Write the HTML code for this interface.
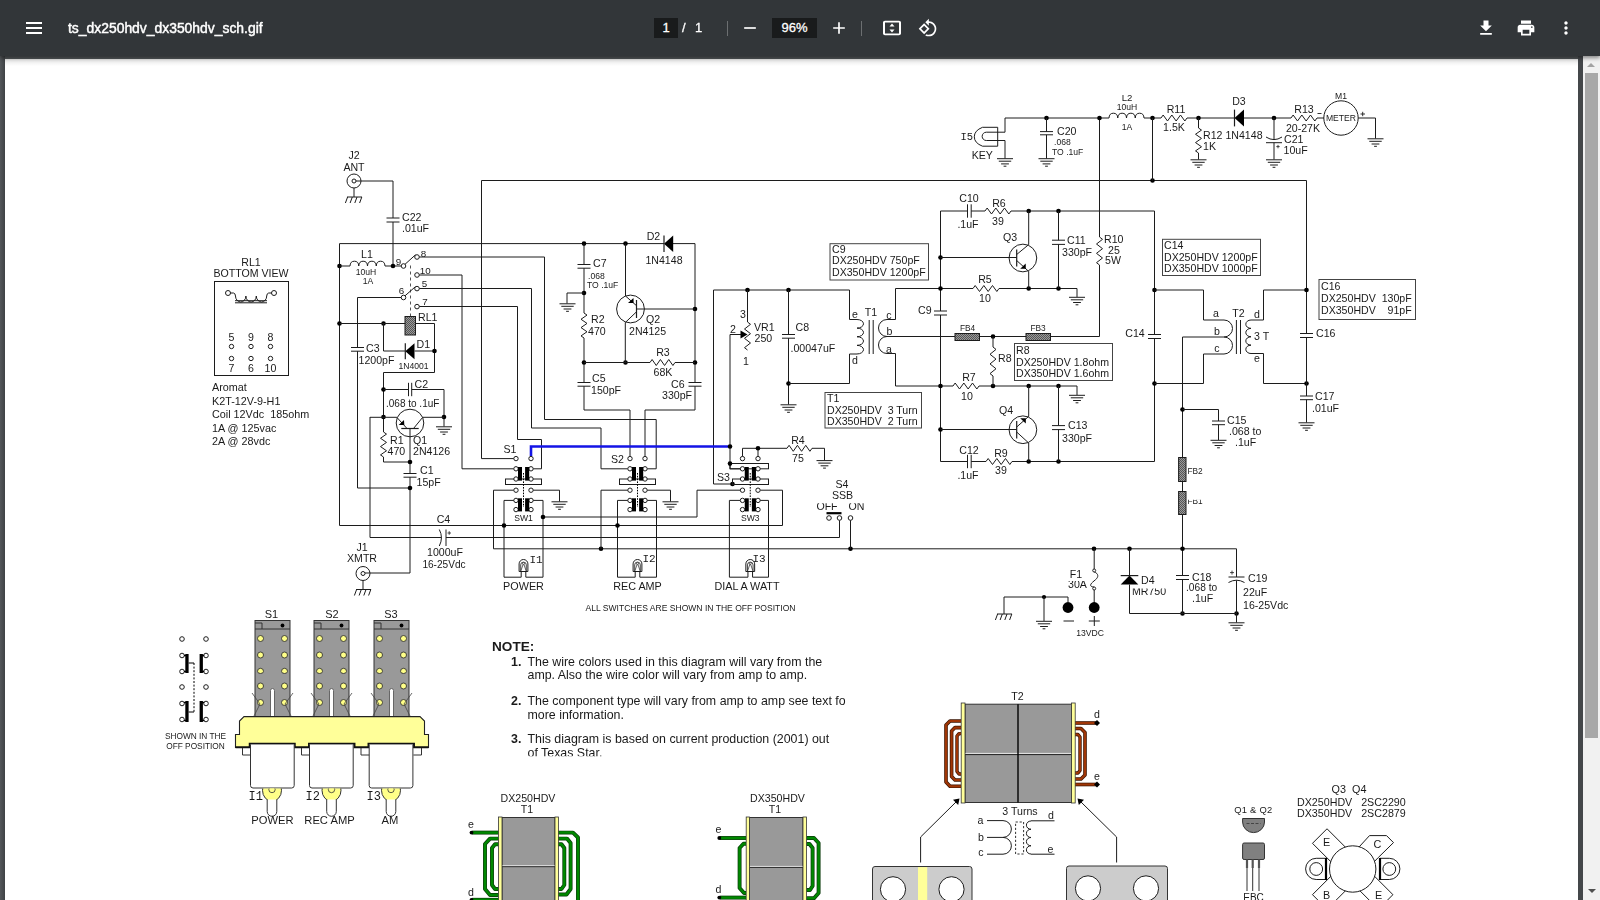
<!DOCTYPE html>
<html lang="en"><head><meta charset="utf-8">
<title>ts_dx250hdv_dx350hdv_sch.gif</title>
<style>
html,body{margin:0;padding:0;width:1600px;height:900px;overflow:hidden;background:#525659;font-family:"Liberation Sans",Arial,sans-serif;}
#viewer{position:absolute;left:0;top:0;width:1600px;height:900px;overflow:hidden;background:#525659;}
#gutl{position:absolute;left:0;top:56px;width:5px;height:844px;background:linear-gradient(90deg,#53575a,#3f4245);}
#page{position:absolute;left:5px;top:59px;width:1573px;height:841px;background:#fff;}
#pageshade{position:absolute;left:5px;top:59px;width:1573px;height:7px;background:linear-gradient(180deg,rgba(0,0,0,.10),rgba(0,0,0,0));}
#gutr{position:absolute;left:1578px;top:56px;width:5px;height:844px;background:#44474a;}
#sb{position:absolute;left:1583px;top:56px;width:17px;height:844px;background:#f1f1f1;}
#sb .thumb{position:absolute;left:2px;top:17px;width:13px;height:665px;background:#a8a8a8;}
#sb .up{position:absolute;left:4px;top:7px;width:0;height:0;border-left:4px solid transparent;border-right:4px solid transparent;border-bottom:4px solid #a3a3a3;}
#sb .dn{position:absolute;left:5px;top:833px;width:0;height:0;border-left:4px solid transparent;border-right:4px solid transparent;border-top:4px solid #505050;}
#tb{position:absolute;left:0;top:0;width:1600px;height:56px;background:#323639;box-shadow:0 2px 4px rgba(0,0,0,.45);color:#fff;}
#tb .title{position:absolute;left:68px;top:0;height:56px;line-height:56px;font-size:13.9px;font-weight:normal;-webkit-text-stroke:0.45px #fff;letter-spacing:0;white-space:nowrap;}
#tb .box{position:absolute;top:18px;height:20px;background:#191b1c;line-height:20px;text-align:center;font-size:13px;-webkit-text-stroke:0.3px #fff;}
#tb .t{position:absolute;top:18px;height:20px;line-height:20px;font-size:13px;-webkit-text-stroke:0.3px #fff;}
#tb .sep{position:absolute;top:21px;width:1px;height:15px;background:#6c6f71;}
#tb svg{position:absolute;}
svg text{font-family:"Liberation Sans",Arial,sans-serif;fill:#1a1a1a;}
#sch{position:absolute;left:0;top:0;will-change:transform;}
</style></head>
<body>
<div id="viewer">
<div id="gutl"></div>
<div id="page"></div>
<div id="pageshade"></div>
<svg id="sch" width="1600" height="900" viewBox="0 0 1600 900">
<defs>
<pattern id="hat" width="2" height="2" patternUnits="userSpaceOnUse"><rect width="2" height="2" fill="#9a9a9a"/><rect width="1" height="1" fill="#555"/><rect x="1" y="1" width="1" height="1" fill="#555"/></pattern>
<clipPath id="cpage"><rect x="5" y="59" width="1573" height="841"/></clipPath>
<clipPath id="cnote"><rect x="480" y="630" width="365.4" height="126.2"/></clipPath>
<clipPath id="clamp"><rect x="240" y="788.6" width="200" height="20"/></clipPath>
<clipPath id="cfb1"><rect x="1186" y="499.8" width="30" height="10"/></clipPath>
<clipPath id="c30a"><rect x="1067.3" y="581" width="30" height="10"/></clipPath>
<clipPath id="cmr"><rect x="1130" y="588.5" width="50" height="10"/></clipPath>
<clipPath id="coff"><rect x="810" y="503.2" width="70" height="10"/></clipPath>
</defs>
<g clip-path="url(#cpage)">
<text x="251" y="265.82" font-size="10.6" text-anchor="middle" xml:space="preserve" >RL1</text>
<text x="251" y="277.12" font-size="10.6" text-anchor="middle" xml:space="preserve" >BOTTOM VIEW</text>
<rect x="214.5" y="281.5" width="74" height="94" fill="none" stroke="#1c1c1c" stroke-width="1" rx="0" />
<circle cx="228" cy="293" r="2.5" fill="#fff" stroke="#1c1c1c" stroke-width="1"/>
<circle cx="274" cy="293" r="2.5" fill="#fff" stroke="#1c1c1c" stroke-width="1"/>
<path d="M230.3,293 H233.5 Q235.3,293.2 235.5,296 a5.2,6 0 0 0 10.4,0 a5.2,6 0 0 0 10.4,0 a5.2,6 0 0 0 10.4,0 Q266.9,293.2 268.7,293 H271.7" fill="none" stroke="#1c1c1c" stroke-width="1" />
<polyline points="235,300.7 267,300.7" fill="none" stroke="#1c1c1c" stroke-width="1" />
<polyline points="235,302.8 267,302.8" fill="none" stroke="#1c1c1c" stroke-width="1" />
<text x="231.5" y="340.82" font-size="10.6" text-anchor="middle" xml:space="preserve" >5</text>
<circle cx="231.5" cy="346.5" r="2.2" fill="#fff" stroke="#1c1c1c" stroke-width="1"/>
<circle cx="231.5" cy="358.5" r="2.2" fill="#fff" stroke="#1c1c1c" stroke-width="1"/>
<text x="231.5" y="372.12" font-size="10.6" text-anchor="middle" xml:space="preserve" >7</text>
<text x="251" y="340.82" font-size="10.6" text-anchor="middle" xml:space="preserve" >9</text>
<circle cx="251" cy="346.5" r="2.2" fill="#fff" stroke="#1c1c1c" stroke-width="1"/>
<circle cx="251" cy="358.5" r="2.2" fill="#fff" stroke="#1c1c1c" stroke-width="1"/>
<text x="251" y="372.12" font-size="10.6" text-anchor="middle" xml:space="preserve" >6</text>
<text x="270.5" y="340.82" font-size="10.6" text-anchor="middle" xml:space="preserve" >8</text>
<circle cx="270.5" cy="346.5" r="2.2" fill="#fff" stroke="#1c1c1c" stroke-width="1"/>
<circle cx="270.5" cy="358.5" r="2.2" fill="#fff" stroke="#1c1c1c" stroke-width="1"/>
<text x="270.5" y="372.12" font-size="10.6" text-anchor="middle" xml:space="preserve" >10</text>
<text x="212" y="391.19" font-size="10.8" xml:space="preserve" >Aromat</text>
<text x="212" y="404.64" font-size="10.8" xml:space="preserve" >K2T-12V-9-H1</text>
<text x="212" y="418.09" font-size="10.8" xml:space="preserve" >Coil 12Vdc  185ohm</text>
<text x="212" y="431.54" font-size="10.8" xml:space="preserve" >1A @ 125vac</text>
<text x="212" y="444.99" font-size="10.8" xml:space="preserve" >2A @ 28vdc</text>
<text x="354" y="158.82" font-size="10.6" text-anchor="middle" xml:space="preserve" >J2</text>
<text x="354" y="171.32" font-size="10.6" text-anchor="middle" xml:space="preserve" >ANT</text>
<circle cx="354" cy="181" r="7" fill="#fff" stroke="#1c1c1c" stroke-width="1"/>
<circle cx="354" cy="181" r="2" fill="#fff" stroke="#1c1c1c" stroke-width="1"/>
<polyline points="356,181 393,181 393,218" fill="none" stroke="#1c1c1c" stroke-width="1" />
<polyline points="386.5,218 399.5,218" fill="none" stroke="#1c1c1c" stroke-width="1" />
<polyline points="386.5,222 399.5,222" fill="none" stroke="#1c1c1c" stroke-width="1" />
<polyline points="393,222 393,266" fill="none" stroke="#1c1c1c" stroke-width="1" />
<polyline points="354,188 354,197" fill="none" stroke="#1c1c1c" stroke-width="1" />
<polyline points="347,197 362,197" fill="none" stroke="#1c1c1c" stroke-width="1" />
<polyline points="347.6,197 345.4,203" fill="none" stroke="#1c1c1c" stroke-width="1" />
<polyline points="352.3,197 350.1,203" fill="none" stroke="#1c1c1c" stroke-width="1" />
<polyline points="357,197 354.8,203" fill="none" stroke="#1c1c1c" stroke-width="1" />
<polyline points="361.8,197 359.6,203" fill="none" stroke="#1c1c1c" stroke-width="1" />
<text x="402" y="220.82" font-size="10.6" xml:space="preserve" >C22</text>
<text x="402" y="231.82" font-size="10.6" xml:space="preserve" >.01uF</text>
<polyline points="664,243.6 339.5,243.6 339.5,525.5 782.5,525.5 782.5,490.2 760.2,490.2" fill="none" stroke="#1c1c1c" stroke-width="1" />
<polyline points="673,243.6 695,243.6 695,382.5" fill="none" stroke="#1c1c1c" stroke-width="1" />
<circle cx="339.5" cy="266" r="2.3" fill="#000"/>
<polyline points="339.5,266 350,266" fill="none" stroke="#1c1c1c" stroke-width="1" />
<path d="M350,266 a4.38,5.03 0 0 1 8.75,0 a4.38,5.03 0 0 1 8.75,0 a4.38,5.03 0 0 1 8.75,0 a4.38,5.03 0 0 1 8.75,0" fill="none" stroke="#1c1c1c" stroke-width="1" />
<polyline points="385,266 401.2,266" fill="none" stroke="#1c1c1c" stroke-width="1" />
<circle cx="393" cy="266" r="2.3" fill="#000"/>
<text x="367" y="257.82" font-size="10.6" text-anchor="middle" xml:space="preserve" >L1</text>
<text x="366" y="275.1" font-size="8.6" text-anchor="middle" fill="#000" xml:space="preserve" >10uH</text>
<text x="368" y="284.1" font-size="8.6" text-anchor="middle" fill="#000" xml:space="preserve" >1A</text>
<text x="398.6" y="264.53" font-size="9.8" text-anchor="middle" xml:space="preserve" >9</text>
<text x="423.6" y="256.53" font-size="9.8" text-anchor="middle" xml:space="preserve" >8</text>
<text x="425.2" y="274.03" font-size="9.8" text-anchor="middle" xml:space="preserve" >10</text>
<text x="424.5" y="287.03" font-size="9.8" text-anchor="middle" xml:space="preserve" >5</text>
<text x="401.5" y="294.03" font-size="9.8" text-anchor="middle" xml:space="preserve" >6</text>
<text x="425" y="305.03" font-size="9.8" text-anchor="middle" xml:space="preserve" >7</text>
<polyline points="410.5,265.5 410.5,316.5" fill="none" stroke="#555" stroke-width="1" stroke-dasharray="3,3"/>
<polyline points="405,264.3 415.5,254.8" fill="none" stroke="#1c1c1c" stroke-width="1" />
<polyline points="405,295.8 415.5,286.6" fill="none" stroke="#1c1c1c" stroke-width="1" />
<circle cx="403.5" cy="266" r="2.3" fill="#fff" stroke="#1c1c1c" stroke-width="1"/>
<circle cx="417" cy="257" r="2.3" fill="#fff" stroke="#1c1c1c" stroke-width="1"/>
<circle cx="417" cy="275" r="2.3" fill="#fff" stroke="#1c1c1c" stroke-width="1"/>
<circle cx="403.5" cy="297.5" r="2.3" fill="#fff" stroke="#1c1c1c" stroke-width="1"/>
<circle cx="417" cy="288.6" r="2.3" fill="#fff" stroke="#1c1c1c" stroke-width="1"/>
<circle cx="417" cy="306.6" r="2.3" fill="#fff" stroke="#1c1c1c" stroke-width="1"/>
<polyline points="419.3,257 544.5,257 544.5,419.5 656.2,419.5 656.2,468.8 647.2,468.8" fill="none" stroke="#1c1c1c" stroke-width="1" />
<polyline points="419.3,275 462,275 462,468.8 513.8,468.8" fill="none" stroke="#1c1c1c" stroke-width="1" />
<polyline points="419.3,288.5 531.5,288.5 531.5,428 601,428 601,468.8 627.8,468.8" fill="none" stroke="#1c1c1c" stroke-width="1" />
<polyline points="419.3,306.5 517.5,306.5 517.5,439.5 541.5,439.5 541.5,468.8 533.2,468.8" fill="none" stroke="#1c1c1c" stroke-width="1" />
<polyline points="401.2,297.5 357.5,297.5 357.5,347.5" fill="none" stroke="#1c1c1c" stroke-width="1" />
<polyline points="351,347.5 364,347.5" fill="none" stroke="#1c1c1c" stroke-width="1" />
<polyline points="351,351.2 364,351.2" fill="none" stroke="#1c1c1c" stroke-width="1" />
<polyline points="357.5,351.2 357.5,488 410,488" fill="none" stroke="#1c1c1c" stroke-width="1" />
<text x="366" y="352.32" font-size="10.6" xml:space="preserve" >C3</text>
<text x="358.5" y="364.02" font-size="10.6" xml:space="preserve" >1200pF</text>
<polyline points="513.8,458.6 481.5,458.6 481.5,180.5 1306.5,180.5 1306.5,333.5" fill="none" stroke="#1c1c1c" stroke-width="1" />
<circle cx="339.5" cy="323.5" r="2.3" fill="#000"/>
<circle cx="383.5" cy="323.5" r="2.3" fill="#000"/>
<polyline points="339.5,323.5 405,323.5" fill="none" stroke="#1c1c1c" stroke-width="1" />
<rect x="405" y="316.5" width="10.5" height="18.5" fill="url(#hat)" stroke="#1c1c1c" stroke-width="1" rx="0" />
<text x="418" y="320.82" font-size="10.6" xml:space="preserve" >RL1</text>
<polyline points="415.5,323.5 434.5,323.5 434.5,372.5 383.5,372.5 383.5,432" fill="none" stroke="#1c1c1c" stroke-width="1" />
<polyline points="383.5,432 386.5,434.08 380.5,438.25 386.5,442.42 380.5,446.58 386.5,450.75 380.5,454.92 383.5,457" fill="none" stroke="#1c1c1c" stroke-width="1" />
<polyline points="383.5,457 383.5,462 410,462" fill="none" stroke="#1c1c1c" stroke-width="1" />
<polyline points="383.5,323.5 383.5,351 405,351" fill="none" stroke="#1c1c1c" stroke-width="1" />
<polygon points="405.3,351.2 414.5,343.2 414.5,359.2" fill="#000"/>
<polyline points="405.3,343.2 405.3,359.2" fill="none" stroke="#1c1c1c" stroke-width="1.2" />
<polyline points="414.5,351 434.5,351" fill="none" stroke="#1c1c1c" stroke-width="1" />
<circle cx="434.5" cy="351" r="2.3" fill="#000"/>
<text x="416.5" y="348.32" font-size="10.6" xml:space="preserve" >D1</text>
<text x="413.5" y="368.6" font-size="8.6" text-anchor="middle" fill="#000" xml:space="preserve" >1N4001</text>
<circle cx="383.5" cy="389.5" r="2.3" fill="#000"/>
<polyline points="383.5,389.5 408.5,389.5" fill="none" stroke="#1c1c1c" stroke-width="1" />
<polyline points="408.5,382.8 408.5,396.2" fill="none" stroke="#1c1c1c" stroke-width="1" />
<polyline points="411.7,382.8 411.7,396.2" fill="none" stroke="#1c1c1c" stroke-width="1" />
<polyline points="411.7,389.5 444,389.5 444,426.5" fill="none" stroke="#1c1c1c" stroke-width="1" />
<polyline points="436,426.8 452,426.8" fill="none" stroke="#1c1c1c" stroke-width="1" />
<polyline points="437.8,429.3 450.2,429.3" fill="none" stroke="#1c1c1c" stroke-width="1" />
<polyline points="440.1,432 447.9,432" fill="none" stroke="#1c1c1c" stroke-width="1" />
<polyline points="442.6,434.3 445.4,434.3" fill="none" stroke="#1c1c1c" stroke-width="1" />
<text x="414.5" y="387.82" font-size="10.6" xml:space="preserve" >C2</text>
<text x="386" y="406.6" font-size="10" xml:space="preserve" >.068 to .1uF</text>
<circle cx="383.5" cy="417" r="2.3" fill="#000"/>
<circle cx="444" cy="417" r="2.3" fill="#000"/>
<circle cx="410" cy="423" r="13.8" fill="none" stroke="#1c1c1c" stroke-width="1"/>
<polyline points="370,417.3 396.8,417.3 407,428.5" fill="none" stroke="#1c1c1c" stroke-width="1" />
<polyline points="444,417.3 422.7,417.3 413.5,428.5" fill="none" stroke="#1c1c1c" stroke-width="1" />
<polyline points="401.3,428.5 418.7,428.5" fill="none" stroke="#1c1c1c" stroke-width="1.2" />
<polygon points="404,420 404.3,425 398.7,425" fill="#000"/>
<polyline points="410,428.5 410,473.5" fill="none" stroke="#1c1c1c" stroke-width="1" />
<polyline points="403.5,473.5 416.5,473.5" fill="none" stroke="#1c1c1c" stroke-width="1" />
<polyline points="403.5,477.2 416.5,477.2" fill="none" stroke="#1c1c1c" stroke-width="1" />
<polyline points="410,477.2 410,573 370,573" fill="none" stroke="#1c1c1c" stroke-width="1" />
<circle cx="410" cy="462" r="2.3" fill="#000"/>
<circle cx="410" cy="488" r="2.3" fill="#000"/>
<text x="390" y="443.82" font-size="10.6" xml:space="preserve" >R1</text>
<text x="387.5" y="455.12" font-size="10.6" xml:space="preserve" >470</text>
<text x="413" y="443.82" font-size="10.6" xml:space="preserve" >Q1</text>
<text x="413" y="455.32" font-size="10.6" xml:space="preserve" >2N4126</text>
<text x="420" y="473.82" font-size="10.6" xml:space="preserve" >C1</text>
<text x="416.5" y="486.32" font-size="10.6" xml:space="preserve" >15pF</text>
<polyline points="370,417 370,537.5 441.5,537.5" fill="none" stroke="#1c1c1c" stroke-width="1" />
<path d="M439.3,529.5 q4.3,8.2 0,16.5" fill="none" stroke="#1c1c1c" stroke-width="1" />
<polyline points="446,529.5 446,546" fill="none" stroke="#1c1c1c" stroke-width="1" />
<polyline points="446,537.5 839.5,537.5 839.5,520.3" fill="none" stroke="#1c1c1c" stroke-width="1" />
<text x="443.5" y="523.32" font-size="10.6" text-anchor="middle" xml:space="preserve" >C4</text>
<polyline points="447.5,533 451,533" fill="none" stroke="#1c1c1c" stroke-width="0.8" />
<polyline points="449.2,531.2 449.2,534.8" fill="none" stroke="#1c1c1c" stroke-width="0.8" />
<text x="445" y="556.32" font-size="10.6" text-anchor="middle" xml:space="preserve" >1000uF</text>
<text x="444" y="567.64" font-size="10.1" text-anchor="middle" xml:space="preserve" >16-25Vdc</text>
<text x="362" y="550.82" font-size="10.6" text-anchor="middle" xml:space="preserve" >J1</text>
<text x="362" y="562.32" font-size="10.6" text-anchor="middle" xml:space="preserve" >XMTR</text>
<circle cx="363" cy="573.5" r="7" fill="#fff" stroke="#1c1c1c" stroke-width="1"/>
<circle cx="363" cy="573.5" r="2" fill="#fff" stroke="#1c1c1c" stroke-width="1"/>
<polyline points="365,573 370,573" fill="none" stroke="#1c1c1c" stroke-width="1" />
<polyline points="363,580.5 363,589.5" fill="none" stroke="#1c1c1c" stroke-width="1" />
<polyline points="356,589.5 371,589.5" fill="none" stroke="#1c1c1c" stroke-width="1" />
<polyline points="356.6,589.5 354.4,595.5" fill="none" stroke="#1c1c1c" stroke-width="1" />
<polyline points="361.3,589.5 359.1,595.5" fill="none" stroke="#1c1c1c" stroke-width="1" />
<polyline points="366,589.5 363.8,595.5" fill="none" stroke="#1c1c1c" stroke-width="1" />
<polyline points="370.8,589.5 368.6,595.5" fill="none" stroke="#1c1c1c" stroke-width="1" />
<circle cx="584" cy="243.6" r="2.3" fill="#000"/>
<circle cx="625.5" cy="243.6" r="2.3" fill="#000"/>
<polygon points="664,243.8 673.2,235.6 673.2,252" fill="#000"/>
<polyline points="664,235.6 664,252" fill="none" stroke="#1c1c1c" stroke-width="1.2" />
<text x="653.5" y="240.32" font-size="10.6" text-anchor="middle" xml:space="preserve" >D2</text>
<text x="664" y="264.32" font-size="10.6" text-anchor="middle" xml:space="preserve" >1N4148</text>
<polyline points="584,243.6 584,264.5" fill="none" stroke="#1c1c1c" stroke-width="1" />
<polyline points="577.5,264.5 590.5,264.5" fill="none" stroke="#1c1c1c" stroke-width="1" />
<polyline points="577.5,268.2 590.5,268.2" fill="none" stroke="#1c1c1c" stroke-width="1" />
<polyline points="584,268.2 584,313" fill="none" stroke="#1c1c1c" stroke-width="1" />
<polyline points="584,313 587,315.08 581,319.25 587,323.42 581,327.58 587,331.75 581,335.92 584,338" fill="none" stroke="#1c1c1c" stroke-width="1" />
<polyline points="584,338 584,382.5" fill="none" stroke="#1c1c1c" stroke-width="1" />
<text x="593" y="266.82" font-size="10.6" xml:space="preserve" >C7</text>
<text x="588" y="278.6" font-size="8.6" fill="#000" xml:space="preserve" >.068</text>
<text x="587" y="288.1" font-size="8.6" fill="#000" xml:space="preserve" >TO .1uF</text>
<circle cx="584" cy="293" r="2.3" fill="#000"/>
<polyline points="584,293 567,293 567,303.5" fill="none" stroke="#1c1c1c" stroke-width="1" />
<polyline points="559.5,303.8 575.5,303.8" fill="none" stroke="#1c1c1c" stroke-width="1" />
<polyline points="561.3,306.3 573.7,306.3" fill="none" stroke="#1c1c1c" stroke-width="1" />
<polyline points="563.6,309 571.4,309" fill="none" stroke="#1c1c1c" stroke-width="1" />
<polyline points="566.1,311.3 568.9,311.3" fill="none" stroke="#1c1c1c" stroke-width="1" />
<text x="591" y="323.32" font-size="10.6" xml:space="preserve" >R2</text>
<text x="588" y="334.82" font-size="10.6" xml:space="preserve" >470</text>
<circle cx="584" cy="362.5" r="2.3" fill="#000"/>
<circle cx="625.5" cy="362.5" r="2.3" fill="#000"/>
<circle cx="695" cy="362.5" r="2.3" fill="#000"/>
<circle cx="695" cy="309" r="2.3" fill="#000"/>
<circle cx="630.5" cy="309" r="13.9" fill="none" stroke="#1c1c1c" stroke-width="1"/>
<polyline points="625.5,243.6 625.5,296 636.3,305.5" fill="none" stroke="#1c1c1c" stroke-width="1" />
<polyline points="636.3,312 625.3,322.5 625.3,362.5" fill="none" stroke="#1c1c1c" stroke-width="1" />
<polyline points="636.5,300 636.5,318" fill="none" stroke="#1c1c1c" stroke-width="1.2" />
<polyline points="636.5,309 695,309" fill="none" stroke="#1c1c1c" stroke-width="1" />
<polygon points="633.5,298 633.6,303 628,303" fill="#000"/>
<text x="646" y="323.32" font-size="10.6" xml:space="preserve" >Q2</text>
<text x="629" y="335.32" font-size="10.6" xml:space="preserve" >2N4125</text>
<polyline points="584,362.5 650,362.5" fill="none" stroke="#1c1c1c" stroke-width="1" />
<polyline points="650,362.5 652.08,359.5 656.25,365.5 660.42,359.5 664.58,365.5 668.75,359.5 672.92,365.5 675,362.5" fill="none" stroke="#1c1c1c" stroke-width="1" />
<polyline points="675,362.5 695,362.5" fill="none" stroke="#1c1c1c" stroke-width="1" />
<text x="663" y="356.32" font-size="10.6" text-anchor="middle" xml:space="preserve" >R3</text>
<text x="663" y="376.12" font-size="10.6" text-anchor="middle" xml:space="preserve" >68K</text>
<polyline points="577.5,382.5 590.5,382.5" fill="none" stroke="#1c1c1c" stroke-width="1" />
<polyline points="577.5,386.2 590.5,386.2" fill="none" stroke="#1c1c1c" stroke-width="1" />
<polyline points="584,386.2 584,410 630,410 630,456.4" fill="none" stroke="#1c1c1c" stroke-width="1" />
<polyline points="688.5,382.5 701.5,382.5" fill="none" stroke="#1c1c1c" stroke-width="1" />
<polyline points="688.5,386.2 701.5,386.2" fill="none" stroke="#1c1c1c" stroke-width="1" />
<polyline points="695,386.2 695,410 645,410 645,456.4" fill="none" stroke="#1c1c1c" stroke-width="1" />
<text x="592" y="381.82" font-size="10.6" xml:space="preserve" >C5</text>
<text x="591" y="394.12" font-size="10.6" xml:space="preserve" >150pF</text>
<text x="671" y="388.32" font-size="10.6" xml:space="preserve" >C6</text>
<text x="662" y="399.32" font-size="10.6" xml:space="preserve" >330pF</text>
<polyline points="732.5,484 713.5,484 713.5,290 849.5,290 849.5,319.5 857,319.5" fill="none" stroke="#1c1c1c" stroke-width="1" />
<circle cx="747.5" cy="290" r="2.3" fill="#000"/>
<circle cx="788.5" cy="290" r="2.3" fill="#000"/>
<circle cx="732.5" cy="484" r="2.3" fill="#000"/>
<polyline points="747.5,290 747.5,322" fill="none" stroke="#1c1c1c" stroke-width="1" />
<polyline points="747.5,322 750.5,324.33 744.5,329 750.5,333.67 744.5,338.33 750.5,343 744.5,347.67 747.5,350" fill="none" stroke="#1c1c1c" stroke-width="1" />
<text x="743" y="318.32" font-size="10.6" text-anchor="middle" xml:space="preserve" >3</text>
<text x="733" y="332.82" font-size="10.6" text-anchor="middle" xml:space="preserve" >2</text>
<text x="746" y="365.32" font-size="10.6" text-anchor="middle" xml:space="preserve" >1</text>
<polyline points="741,334.5 730,334.5 730,468.8 740.3,468.8" fill="none" stroke="#1c1c1c" stroke-width="1" />
<polygon points="747.5,334.5 740.5,330.6 740.5,338.4" fill="#000"/>
<text x="754" y="330.82" font-size="10.6" xml:space="preserve" >VR1</text>
<text x="754.5" y="342.32" font-size="10.6" xml:space="preserve" >250</text>
<polyline points="788.5,290 788.5,334.5" fill="none" stroke="#1c1c1c" stroke-width="1" />
<polyline points="782,334.5 795,334.5" fill="none" stroke="#1c1c1c" stroke-width="1" />
<polyline points="782,338.2 795,338.2" fill="none" stroke="#1c1c1c" stroke-width="1" />
<polyline points="788.5,338.2 788.5,404.5" fill="none" stroke="#1c1c1c" stroke-width="1" />
<polyline points="780.5,404.8 796.5,404.8" fill="none" stroke="#1c1c1c" stroke-width="1" />
<polyline points="782.3,407.3 794.7,407.3" fill="none" stroke="#1c1c1c" stroke-width="1" />
<polyline points="784.6,410 792.4,410" fill="none" stroke="#1c1c1c" stroke-width="1" />
<polyline points="787.1,412.3 789.9,412.3" fill="none" stroke="#1c1c1c" stroke-width="1" />
<circle cx="788.5" cy="383.5" r="2.3" fill="#000"/>
<text x="795.5" y="330.82" font-size="10.6" xml:space="preserve" >C8</text>
<text x="790.5" y="351.82" font-size="10.6" xml:space="preserve" >.00047uF</text>
<polyline points="788.5,383.5 849.5,383.5 849.5,354 857,354" fill="none" stroke="#1c1c1c" stroke-width="1" />
<path d="M857,319.5 a6.5,4.31 0 0 1 0,8.62 a6.5,4.31 0 0 1 0,8.62 a6.5,4.31 0 0 1 0,8.62 a6.5,4.31 0 0 1 0,8.62" fill="none" stroke="#1c1c1c" stroke-width="1" />
<polyline points="869.2,320 869.2,354" fill="none" stroke="#1c1c1c" stroke-width="1" />
<polyline points="873.2,320 873.2,354" fill="none" stroke="#1c1c1c" stroke-width="1" />
<text x="871" y="315.82" font-size="10.6" text-anchor="middle" xml:space="preserve" >T1</text>
<text x="855" y="317.86" font-size="10.6" text-anchor="middle" xml:space="preserve" >e</text>
<text x="855" y="363.82" font-size="10.6" text-anchor="middle" xml:space="preserve" >d</text>
<path d="M895.5,319.5 L887,319.5 a8.5,8.5 0 0 0 0,17 a8.5,8.5 0 0 0 0,17 L895.5,353.5" fill="none" stroke="#1c1c1c" stroke-width="1" />
<text x="889" y="318.86" font-size="10.6" text-anchor="middle" xml:space="preserve" >c</text>
<text x="889.5" y="335.32" font-size="10.6" text-anchor="middle" xml:space="preserve" >b</text>
<text x="889" y="352.86" font-size="10.6" text-anchor="middle" xml:space="preserve" >a</text>
<polyline points="895.5,319.5 895.5,288.5 973,288.5" fill="none" stroke="#1c1c1c" stroke-width="1" />
<polyline points="973,288.5 975.17,285.5 979.5,291.5 983.83,285.5 988.17,291.5 992.5,285.5 996.83,291.5 999,288.5" fill="none" stroke="#1c1c1c" stroke-width="1" />
<polyline points="999,288.5 1077,288.5 1077,297" fill="none" stroke="#1c1c1c" stroke-width="1" />
<polyline points="1069,297.3 1085,297.3" fill="none" stroke="#1c1c1c" stroke-width="1" />
<polyline points="1070.8,299.8 1083.2,299.8" fill="none" stroke="#1c1c1c" stroke-width="1" />
<polyline points="1073.1,302.5 1080.9,302.5" fill="none" stroke="#1c1c1c" stroke-width="1" />
<polyline points="1075.6,304.8 1078.4,304.8" fill="none" stroke="#1c1c1c" stroke-width="1" />
<polyline points="895.5,353.5 895.5,386 953,386" fill="none" stroke="#1c1c1c" stroke-width="1" />
<polyline points="953,386 955.17,383 959.5,389 963.83,383 968.17,389 972.5,383 976.83,389 979,386" fill="none" stroke="#1c1c1c" stroke-width="1" />
<polyline points="979,386 1077,386 1077,395" fill="none" stroke="#1c1c1c" stroke-width="1" />
<polyline points="1069,395.3 1085,395.3" fill="none" stroke="#1c1c1c" stroke-width="1" />
<polyline points="1070.8,397.8 1083.2,397.8" fill="none" stroke="#1c1c1c" stroke-width="1" />
<polyline points="1073.1,400.5 1080.9,400.5" fill="none" stroke="#1c1c1c" stroke-width="1" />
<polyline points="1075.6,402.8 1078.4,402.8" fill="none" stroke="#1c1c1c" stroke-width="1" />
<polyline points="887,336.5 955,336.5" fill="none" stroke="#1c1c1c" stroke-width="1" />
<rect x="955" y="333.5" width="24.5" height="7" fill="url(#hat)" stroke="#1c1c1c" stroke-width="1" rx="0" />
<polyline points="979.5,336.5 1026,336.5" fill="none" stroke="#1c1c1c" stroke-width="1" />
<rect x="1026" y="333.5" width="24.5" height="7" fill="url(#hat)" stroke="#1c1c1c" stroke-width="1" rx="0" />
<polyline points="1050.5,336.5 1099.5,336.5 1099.5,265" fill="none" stroke="#1c1c1c" stroke-width="1" />
<text x="967.5" y="330.99" font-size="8.3" text-anchor="middle" fill="#000" xml:space="preserve" >FB4</text>
<text x="1038" y="330.99" font-size="8.3" text-anchor="middle" fill="#000" xml:space="preserve" >FB3</text>
<rect x="830" y="243.7" width="98.5" height="36.3" fill="none" stroke="#444" stroke-width="1" rx="0" />
<text x="832" y="253.32" font-size="10.6" xml:space="preserve" >C9</text>
<text x="832" y="264.32" font-size="10.6" xml:space="preserve" >DX250HDV 750pF</text>
<text x="832" y="275.82" font-size="10.6" xml:space="preserve" >DX350HDV 1200pF</text>
<rect x="825" y="392.5" width="96.5" height="35.5" fill="none" stroke="#444" stroke-width="1" rx="0" />
<text x="827" y="402.32" font-size="10.6" xml:space="preserve" >T1</text>
<text x="827" y="413.82" font-size="10.6" xml:space="preserve" >DX250HDV  3 Turn</text>
<text x="827" y="425.32" font-size="10.6" xml:space="preserve" >DX350HDV  2 Turn</text>
<polyline points="940.5,211 940.5,311" fill="none" stroke="#1c1c1c" stroke-width="1" />
<polyline points="934,311 947,311" fill="none" stroke="#1c1c1c" stroke-width="1" />
<polyline points="934,315 947,315" fill="none" stroke="#1c1c1c" stroke-width="1" />
<polyline points="940.5,315 940.5,461.5 967.5,461.5" fill="none" stroke="#1c1c1c" stroke-width="1" />
<polyline points="967.5,454.8 967.5,468.2" fill="none" stroke="#1c1c1c" stroke-width="1" />
<polyline points="971.2,454.8 971.2,468.2" fill="none" stroke="#1c1c1c" stroke-width="1" />
<polyline points="971.2,461.5 986,461.5" fill="none" stroke="#1c1c1c" stroke-width="1" />
<polyline points="986,461.5 988.17,458.5 992.5,464.5 996.83,458.5 1001.17,464.5 1005.5,458.5 1009.83,464.5 1012,461.5" fill="none" stroke="#1c1c1c" stroke-width="1" />
<polyline points="1012,461.5 1154.5,461.5 1154.5,338.5" fill="none" stroke="#1c1c1c" stroke-width="1" />
<polyline points="1148,334.5 1161,334.5" fill="none" stroke="#1c1c1c" stroke-width="1" />
<polyline points="1148,338.5 1161,338.5" fill="none" stroke="#1c1c1c" stroke-width="1" />
<polyline points="1154.5,334.5 1154.5,211 1011,211" fill="none" stroke="#1c1c1c" stroke-width="1" />
<polyline points="985,211 987.17,208 991.5,214 995.83,208 1000.17,214 1004.5,208 1008.83,214 1011,211" fill="none" stroke="#1c1c1c" stroke-width="1" />
<polyline points="985,211 971.2,211" fill="none" stroke="#1c1c1c" stroke-width="1" />
<polyline points="967.5,204.3 967.5,217.7" fill="none" stroke="#1c1c1c" stroke-width="1" />
<polyline points="971.2,204.3 971.2,217.7" fill="none" stroke="#1c1c1c" stroke-width="1" />
<polyline points="967.5,211 940.5,211" fill="none" stroke="#1c1c1c" stroke-width="1" />
<circle cx="940.5" cy="257.5" r="2.3" fill="#000"/>
<circle cx="940.5" cy="288.5" r="2.3" fill="#000"/>
<circle cx="940.5" cy="386" r="2.3" fill="#000"/>
<circle cx="940.5" cy="429.5" r="2.3" fill="#000"/>
<circle cx="1028.7" cy="211" r="2.3" fill="#000"/>
<circle cx="1058.5" cy="211" r="2.3" fill="#000"/>
<circle cx="1028.7" cy="288.5" r="2.3" fill="#000"/>
<circle cx="1058.5" cy="288.5" r="2.3" fill="#000"/>
<circle cx="993" cy="336.5" r="2.3" fill="#000"/>
<circle cx="993" cy="386" r="2.3" fill="#000"/>
<circle cx="1028.7" cy="386" r="2.3" fill="#000"/>
<circle cx="1058.5" cy="386" r="2.3" fill="#000"/>
<circle cx="1028.7" cy="461.5" r="2.3" fill="#000"/>
<circle cx="1058.5" cy="461.5" r="2.3" fill="#000"/>
<circle cx="1154.5" cy="290" r="2.3" fill="#000"/>
<circle cx="1154.5" cy="383.5" r="2.3" fill="#000"/>
<text x="918" y="313.82" font-size="10.6" xml:space="preserve" >C9</text>
<text x="969" y="201.82" font-size="10.6" text-anchor="middle" xml:space="preserve" >C10</text>
<text x="968" y="228.32" font-size="10.6" text-anchor="middle" xml:space="preserve" >.1uF</text>
<text x="999" y="206.82" font-size="10.6" text-anchor="middle" xml:space="preserve" >R6</text>
<text x="998" y="224.82" font-size="10.6" text-anchor="middle" xml:space="preserve" >39</text>
<text x="969" y="453.82" font-size="10.6" text-anchor="middle" xml:space="preserve" >C12</text>
<text x="968" y="479.32" font-size="10.6" text-anchor="middle" xml:space="preserve" >.1uF</text>
<text x="1001" y="456.82" font-size="10.6" text-anchor="middle" xml:space="preserve" >R9</text>
<text x="1001" y="474.32" font-size="10.6" text-anchor="middle" xml:space="preserve" >39</text>
<text x="985" y="282.82" font-size="10.6" text-anchor="middle" xml:space="preserve" >R5</text>
<text x="985" y="302.32" font-size="10.6" text-anchor="middle" xml:space="preserve" >10</text>
<text x="969" y="380.82" font-size="10.6" text-anchor="middle" xml:space="preserve" >R7</text>
<text x="967" y="400.32" font-size="10.6" text-anchor="middle" xml:space="preserve" >10</text>
<circle cx="1022.9" cy="258" r="13.85" fill="none" stroke="#1c1c1c" stroke-width="1"/>
<polyline points="940.5,257.5 1016.7,257.5" fill="none" stroke="#1c1c1c" stroke-width="1" />
<polyline points="1016.7,249.5 1016.7,266.5" fill="none" stroke="#1c1c1c" stroke-width="1.2" />
<polyline points="1016.7,254.5 1028.7,244.6 1028.7,211" fill="none" stroke="#1c1c1c" stroke-width="1" />
<polyline points="1016.7,260.5 1028.7,271.4 1028.7,288.5" fill="none" stroke="#1c1c1c" stroke-width="1" />
<polygon points="1025.7,263.5 1025.8,268.7 1020.2,268.7" fill="#000"/>
<text x="1010" y="240.82" font-size="10.6" text-anchor="middle" xml:space="preserve" >Q3</text>
<circle cx="1022.9" cy="429.75" r="13.85" fill="none" stroke="#1c1c1c" stroke-width="1"/>
<polyline points="940.5,429.5 1016.7,429.5" fill="none" stroke="#1c1c1c" stroke-width="1" />
<polyline points="1016.7,421 1016.7,438.5" fill="none" stroke="#1c1c1c" stroke-width="1.2" />
<polyline points="1016.7,427 1028.7,416.4 1028.7,386" fill="none" stroke="#1c1c1c" stroke-width="1" />
<polyline points="1016.7,432 1028.7,443 1028.7,461.5" fill="none" stroke="#1c1c1c" stroke-width="1" />
<polygon points="1020.2,418.3 1025.8,418.3 1025.8,423.5" fill="#000"/>
<text x="1006" y="414.32" font-size="10.6" text-anchor="middle" xml:space="preserve" >Q4</text>
<polyline points="1058.5,211 1058.5,240.2" fill="none" stroke="#1c1c1c" stroke-width="1" />
<polyline points="1052,240.2 1065,240.2" fill="none" stroke="#1c1c1c" stroke-width="1" />
<polyline points="1052,244.4 1065,244.4" fill="none" stroke="#1c1c1c" stroke-width="1" />
<polyline points="1058.5,244.4 1058.5,288.5" fill="none" stroke="#1c1c1c" stroke-width="1" />
<polyline points="1058.5,386 1058.5,425.6" fill="none" stroke="#1c1c1c" stroke-width="1" />
<polyline points="1052,425.6 1065,425.6" fill="none" stroke="#1c1c1c" stroke-width="1" />
<polyline points="1052,429.6 1065,429.6" fill="none" stroke="#1c1c1c" stroke-width="1" />
<polyline points="1058.5,429.6 1058.5,461.5" fill="none" stroke="#1c1c1c" stroke-width="1" />
<text x="1067" y="243.82" font-size="10.6" xml:space="preserve" >C11</text>
<text x="1062" y="256.32" font-size="10.6" xml:space="preserve" >330pF</text>
<text x="1068" y="429.32" font-size="10.6" xml:space="preserve" >C13</text>
<text x="1062" y="441.82" font-size="10.6" xml:space="preserve" >330pF</text>
<polyline points="993,336.5 993,347" fill="none" stroke="#1c1c1c" stroke-width="1" />
<polyline points="993,347 996,349.42 990,354.25 996,359.08 990,363.92 996,368.75 990,373.58 993,376" fill="none" stroke="#1c1c1c" stroke-width="1" />
<polyline points="993,376 993,386" fill="none" stroke="#1c1c1c" stroke-width="1" />
<text x="998" y="361.82" font-size="10.6" xml:space="preserve" >R8</text>
<rect x="1014.5" y="343.5" width="98" height="37" fill="none" stroke="#444" stroke-width="1" rx="0" />
<text x="1016" y="353.82" font-size="10.6" xml:space="preserve" >R8</text>
<text x="1016" y="365.82" font-size="10.6" xml:space="preserve" >DX250HDV 1.8ohm</text>
<text x="1016" y="377.32" font-size="10.6" xml:space="preserve" >DX350HDV 1.6ohm</text>
<polyline points="1099.5,118 1099.5,237" fill="none" stroke="#1c1c1c" stroke-width="1" />
<polyline points="1099.5,237 1102.5,239.33 1096.5,244 1102.5,248.67 1096.5,253.33 1102.5,258 1096.5,262.67 1099.5,265" fill="none" stroke="#1c1c1c" stroke-width="1" />
<text x="1104" y="243.32" font-size="10.6" xml:space="preserve" >R10</text>
<text x="1108" y="253.82" font-size="10.6" xml:space="preserve" >25</text>
<text x="1105" y="264.32" font-size="10.6" xml:space="preserve" >5W</text>
<rect x="1162.5" y="239.3" width="98" height="36.2" fill="none" stroke="#444" stroke-width="1" rx="0" />
<text x="1164" y="249.32" font-size="10.6" xml:space="preserve" >C14</text>
<text x="1164" y="260.52" font-size="10.6" xml:space="preserve" >DX250HDV 1200pF</text>
<text x="1164" y="271.82" font-size="10.6" xml:space="preserve" >DX350HDV 1000pF</text>
<text x="1135" y="336.82" font-size="10.6" text-anchor="middle" xml:space="preserve" >C14</text>
<polyline points="1154.5,290 1203.5,290 1203.5,320 1224,320" fill="none" stroke="#1c1c1c" stroke-width="1" />
<polyline points="1154.5,383.5 1203.5,383.5 1203.5,354 1224,354" fill="none" stroke="#1c1c1c" stroke-width="1" />
<path d="M1224,320 a8.5,8.5 0 0 1 0,17 a8.5,8.5 0 0 1 0,17" fill="none" stroke="#1c1c1c" stroke-width="1" />
<polyline points="1224,337 1182.5,337 1182.5,457.5" fill="none" stroke="#1c1c1c" stroke-width="1" />
<rect x="1178.6" y="457.5" width="7.4" height="24" fill="url(#hat)" stroke="#1c1c1c" stroke-width="1" rx="0" />
<polyline points="1182.5,481.5 1182.5,491.5" fill="none" stroke="#1c1c1c" stroke-width="1" />
<rect x="1178.6" y="491.5" width="7.4" height="23" fill="url(#hat)" stroke="#1c1c1c" stroke-width="1" rx="0" />
<polyline points="1182.5,514.5 1182.5,575.5" fill="none" stroke="#1c1c1c" stroke-width="1" />
<text x="1216" y="317.36" font-size="10.6" text-anchor="middle" xml:space="preserve" >a</text>
<text x="1217" y="335.32" font-size="10.6" text-anchor="middle" xml:space="preserve" >b</text>
<text x="1217" y="352.36" font-size="10.6" text-anchor="middle" xml:space="preserve" >c</text>
<polyline points="1236.4,320 1236.4,354" fill="none" stroke="#1c1c1c" stroke-width="1" />
<polyline points="1240.5,320 1240.5,354" fill="none" stroke="#1c1c1c" stroke-width="1" />
<text x="1238.5" y="316.82" font-size="10.6" text-anchor="middle" xml:space="preserve" >T2</text>
<path d="M1251,320 a5.2,4.19 0 0 0 0,8.38 a5.2,4.19 0 0 0 0,8.38 a5.2,4.19 0 0 0 0,8.38 a5.2,4.19 0 0 0 0,8.38" fill="none" stroke="#1c1c1c" stroke-width="1" />
<polyline points="1251,320 1263.5,320 1263.5,290 1306.5,290" fill="none" stroke="#1c1c1c" stroke-width="1" />
<polyline points="1251,353.5 1263.5,353.5 1263.5,383.5 1306.5,383.5" fill="none" stroke="#1c1c1c" stroke-width="1" />
<text x="1257" y="317.82" font-size="10.6" text-anchor="middle" xml:space="preserve" >d</text>
<text x="1257" y="362.36" font-size="10.6" text-anchor="middle" xml:space="preserve" >e</text>
<text x="1254" y="339.82" font-size="10.6" xml:space="preserve" >3 T</text>
<circle cx="1306.5" cy="290" r="2.3" fill="#000"/>
<circle cx="1306.5" cy="383.5" r="2.3" fill="#000"/>
<polyline points="1300,333.5 1313,333.5" fill="none" stroke="#1c1c1c" stroke-width="1" />
<polyline points="1300,337.5 1313,337.5" fill="none" stroke="#1c1c1c" stroke-width="1" />
<polyline points="1306.5,337.5 1306.5,396" fill="none" stroke="#1c1c1c" stroke-width="1" />
<polyline points="1300,396 1313,396" fill="none" stroke="#1c1c1c" stroke-width="1" />
<polyline points="1300,399.7 1313,399.7" fill="none" stroke="#1c1c1c" stroke-width="1" />
<polyline points="1306.5,399.7 1306.5,422.5" fill="none" stroke="#1c1c1c" stroke-width="1" />
<polyline points="1298.5,422.8 1314.5,422.8" fill="none" stroke="#1c1c1c" stroke-width="1" />
<polyline points="1300.3,425.3 1312.7,425.3" fill="none" stroke="#1c1c1c" stroke-width="1" />
<polyline points="1302.6,428 1310.4,428" fill="none" stroke="#1c1c1c" stroke-width="1" />
<polyline points="1305.1,430.3 1307.9,430.3" fill="none" stroke="#1c1c1c" stroke-width="1" />
<text x="1316" y="337.32" font-size="10.6" xml:space="preserve" >C16</text>
<text x="1315" y="400.32" font-size="10.6" xml:space="preserve" >C17</text>
<text x="1312" y="412.32" font-size="10.6" xml:space="preserve" >.01uF</text>
<rect x="1319" y="279.5" width="96.5" height="40" fill="none" stroke="#444" stroke-width="1" rx="0" />
<text x="1321" y="290.32" font-size="10.6" xml:space="preserve" >C16</text>
<text x="1321" y="301.82" font-size="10.6" xml:space="preserve" >DX250HDV  130pF</text>
<text x="1321" y="314.32" font-size="10.6" xml:space="preserve" >DX350HDV    91pF</text>
<circle cx="1182.5" cy="409.5" r="2.3" fill="#000"/>
<polyline points="1182.5,409.5 1218.5,409.5 1218.5,421" fill="none" stroke="#1c1c1c" stroke-width="1" />
<polyline points="1212,421 1225,421" fill="none" stroke="#1c1c1c" stroke-width="1" />
<polyline points="1212,424.7 1225,424.7" fill="none" stroke="#1c1c1c" stroke-width="1" />
<polyline points="1218.5,424.7 1218.5,440" fill="none" stroke="#1c1c1c" stroke-width="1" />
<polyline points="1210.5,440.3 1226.5,440.3" fill="none" stroke="#1c1c1c" stroke-width="1" />
<polyline points="1212.3,442.8 1224.7,442.8" fill="none" stroke="#1c1c1c" stroke-width="1" />
<polyline points="1214.6,445.5 1222.4,445.5" fill="none" stroke="#1c1c1c" stroke-width="1" />
<polyline points="1217.1,447.8 1219.9,447.8" fill="none" stroke="#1c1c1c" stroke-width="1" />
<text x="1227" y="423.82" font-size="10.6" xml:space="preserve" >C15</text>
<text x="1229" y="435.32" font-size="10.6" xml:space="preserve" >.068 to</text>
<text x="1235" y="446.32" font-size="10.6" xml:space="preserve" >.1uF</text>
<text x="1187.5" y="473.99" font-size="8.3" fill="#000" xml:space="preserve" >FB2</text>
<g clip-path="url(#cfb1)">
<text x="1187.5" y="504.49" font-size="8.3" fill="#000" xml:space="preserve" >FB1</text>
</g>
<polyline points="1005,132.2 1005,118 1109,118" fill="none" stroke="#1c1c1c" stroke-width="1" />
<path d="M1109,118 a4.38,5.03 0 0 1 8.75,0 a4.38,5.03 0 0 1 8.75,0 a4.38,5.03 0 0 1 8.75,0 a4.38,5.03 0 0 1 8.75,0" fill="none" stroke="#1c1c1c" stroke-width="1" />
<polyline points="1144,118 1161,118" fill="none" stroke="#1c1c1c" stroke-width="1" />
<polyline points="1161,118 1163.17,115 1167.5,121 1171.83,115 1176.17,121 1180.5,115 1184.83,121 1187,118" fill="none" stroke="#1c1c1c" stroke-width="1" />
<polyline points="1187,118 1234.5,118" fill="none" stroke="#1c1c1c" stroke-width="1" />
<polygon points="1234.5,118 1244,109.6 1244,126.4" fill="#000"/>
<polyline points="1234.5,109.6 1234.5,126.4" fill="none" stroke="#1c1c1c" stroke-width="1.2" />
<polyline points="1244,118 1291,118" fill="none" stroke="#1c1c1c" stroke-width="1" />
<polyline points="1291,118 1293.17,115 1297.5,121 1301.83,115 1306.17,121 1310.5,115 1314.83,121 1317,118" fill="none" stroke="#1c1c1c" stroke-width="1" />
<polyline points="1317,118 1324,118" fill="none" stroke="#1c1c1c" stroke-width="1" />
<polyline points="1005,140.5 1005,158.5" fill="none" stroke="#1c1c1c" stroke-width="1" />
<polyline points="997,158.7 1013,158.7" fill="none" stroke="#1c1c1c" stroke-width="1" />
<polyline points="998.8,161.2 1011.2,161.2" fill="none" stroke="#1c1c1c" stroke-width="1" />
<polyline points="1001.1,163.9 1008.9,163.9" fill="none" stroke="#1c1c1c" stroke-width="1" />
<polyline points="1003.6,166.2 1006.4,166.2" fill="none" stroke="#1c1c1c" stroke-width="1" />
<circle cx="1046.5" cy="118" r="2.3" fill="#000"/>
<circle cx="1099.5" cy="118" r="2.3" fill="#000"/>
<circle cx="1152.5" cy="118" r="2.3" fill="#000"/>
<circle cx="1198.5" cy="118" r="2.3" fill="#000"/>
<circle cx="1274" cy="118" r="2.3" fill="#000"/>
<circle cx="1152.5" cy="180.5" r="2.3" fill="#000"/>
<path d="M997.7,127.3 H982.5 Q974.3,130.5 974.3,136.8 Q974.3,143 982.5,146.2 H997.7 Z" fill="none" stroke="#1c1c1c" stroke-width="1" />
<path d="M1005,132.2 H986.3 a4.15,4.15 0 0 0 0,8.3 H1005" fill="none" stroke="#1c1c1c" stroke-width="1" />
<text x="960.5" y="140.28" font-size="10.5" style='font-family:"Liberation Mono",monospace' xml:space="preserve" >I5</text>
<text x="982.3" y="158.52" font-size="10.6" text-anchor="middle" xml:space="preserve" >KEY</text>
<polyline points="1046.5,118 1046.5,131.6" fill="none" stroke="#1c1c1c" stroke-width="1" />
<polyline points="1040,131.6 1053,131.6" fill="none" stroke="#1c1c1c" stroke-width="1" />
<polyline points="1040,134.8 1053,134.8" fill="none" stroke="#1c1c1c" stroke-width="1" />
<polyline points="1046.5,134.8 1046.5,158.5" fill="none" stroke="#1c1c1c" stroke-width="1" />
<polyline points="1038.5,158.7 1054.5,158.7" fill="none" stroke="#1c1c1c" stroke-width="1" />
<polyline points="1040.3,161.2 1052.7,161.2" fill="none" stroke="#1c1c1c" stroke-width="1" />
<polyline points="1042.6,163.9 1050.4,163.9" fill="none" stroke="#1c1c1c" stroke-width="1" />
<polyline points="1045.1,166.2 1047.9,166.2" fill="none" stroke="#1c1c1c" stroke-width="1" />
<text x="1057" y="135.32" font-size="10.6" xml:space="preserve" >C20</text>
<text x="1054" y="145.1" font-size="8.6" fill="#000" xml:space="preserve" >.068</text>
<text x="1052" y="155.1" font-size="8.6" fill="#000" xml:space="preserve" >TO .1uF</text>
<text x="1127" y="101.46" font-size="9.6" text-anchor="middle" fill="#000" xml:space="preserve" >L2</text>
<text x="1127" y="109.9" font-size="8.6" text-anchor="middle" fill="#000" xml:space="preserve" >10uH</text>
<text x="1127" y="129.6" font-size="8.6" text-anchor="middle" fill="#000" xml:space="preserve" >1A</text>
<polyline points="1152.5,118 1152.5,180.5" fill="none" stroke="#1c1c1c" stroke-width="1" />
<text x="1176" y="113.32" font-size="10.6" text-anchor="middle" xml:space="preserve" >R11</text>
<text x="1174" y="131.32" font-size="10.6" text-anchor="middle" xml:space="preserve" >1.5K</text>
<polyline points="1198.5,118 1198.5,128" fill="none" stroke="#1c1c1c" stroke-width="1" />
<polyline points="1198.5,128 1201.5,130.08 1195.5,134.25 1201.5,138.42 1195.5,142.58 1201.5,146.75 1195.5,150.92 1198.5,153" fill="none" stroke="#1c1c1c" stroke-width="1" />
<polyline points="1198.5,153 1198.5,159.5" fill="none" stroke="#1c1c1c" stroke-width="1" />
<polyline points="1190.5,159.8 1206.5,159.8" fill="none" stroke="#1c1c1c" stroke-width="1" />
<polyline points="1192.3,162.3 1204.7,162.3" fill="none" stroke="#1c1c1c" stroke-width="1" />
<polyline points="1194.6,165 1202.4,165" fill="none" stroke="#1c1c1c" stroke-width="1" />
<polyline points="1197.1,167.3 1199.9,167.3" fill="none" stroke="#1c1c1c" stroke-width="1" />
<text x="1203" y="139.32" font-size="10.6" xml:space="preserve" >R12</text>
<text x="1203" y="150.32" font-size="10.6" xml:space="preserve" >1K</text>
<text x="1239" y="105.32" font-size="10.6" text-anchor="middle" xml:space="preserve" >D3</text>
<text x="1244" y="139.32" font-size="10.6" text-anchor="middle" xml:space="preserve" >1N4148</text>
<polyline points="1274,118 1274,139" fill="none" stroke="#1c1c1c" stroke-width="1" />
<path d="M1266,137 q8,5.2 16,0" fill="none" stroke="#1c1c1c" stroke-width="1" />
<polyline points="1266,142.7 1282,142.7" fill="none" stroke="#1c1c1c" stroke-width="1" />
<polyline points="1274,142.7 1274,159.5" fill="none" stroke="#1c1c1c" stroke-width="1" />
<polyline points="1266,159.8 1282,159.8" fill="none" stroke="#1c1c1c" stroke-width="1" />
<polyline points="1267.8,162.3 1280.2,162.3" fill="none" stroke="#1c1c1c" stroke-width="1" />
<polyline points="1270.1,165 1277.9,165" fill="none" stroke="#1c1c1c" stroke-width="1" />
<polyline points="1272.6,167.3 1275.4,167.3" fill="none" stroke="#1c1c1c" stroke-width="1" />
<polyline points="1276.3,146.6 1279.7,146.6" fill="none" stroke="#1c1c1c" stroke-width="0.8" />
<polyline points="1278,144.9 1278,148.3" fill="none" stroke="#1c1c1c" stroke-width="0.8" />
<text x="1284" y="143.32" font-size="10.6" xml:space="preserve" >C21</text>
<text x="1283.5" y="153.82" font-size="10.6" xml:space="preserve" >10uF</text>
<text x="1304" y="113.32" font-size="10.6" text-anchor="middle" xml:space="preserve" >R13</text>
<text x="1303" y="131.62" font-size="10.6" text-anchor="middle" xml:space="preserve" >20-27K</text>
<circle cx="1341" cy="118" r="17.2" fill="none" stroke="#1c1c1c" stroke-width="1"/>
<text x="1341" y="121.4" font-size="8.6" text-anchor="middle" fill="#000" xml:space="preserve" >METER</text>
<text x="1341" y="98.5" font-size="8.6" text-anchor="middle" fill="#000" xml:space="preserve" >M1</text>
<polyline points="1317.5,113.5 1321.5,113.5" fill="none" stroke="#1c1c1c" stroke-width="0.9" />
<polyline points="1360.5,114 1365,114" fill="none" stroke="#1c1c1c" stroke-width="0.9" />
<polyline points="1362.7,111.8 1362.7,116.2" fill="none" stroke="#1c1c1c" stroke-width="0.9" />
<polyline points="1358.2,118 1375.5,118 1375.5,138.5" fill="none" stroke="#1c1c1c" stroke-width="1" />
<polyline points="1367.5,138.8 1383.5,138.8" fill="none" stroke="#1c1c1c" stroke-width="1" />
<polyline points="1369.3,141.3 1381.7,141.3" fill="none" stroke="#1c1c1c" stroke-width="1" />
<polyline points="1371.6,144 1379.4,144" fill="none" stroke="#1c1c1c" stroke-width="1" />
<polyline points="1374.1,146.3 1376.9,146.3" fill="none" stroke="#1c1c1c" stroke-width="1" />
<polyline points="493.5,490.2 493.5,548.8 1236.5,548.8 1236.5,577" fill="none" stroke="#1c1c1c" stroke-width="1" />
<polyline points="513.8,490.2 493.5,490.2" fill="none" stroke="#1c1c1c" stroke-width="1" />
<circle cx="601" cy="548.8" r="2.3" fill="#000"/>
<circle cx="850.5" cy="548.8" r="2.3" fill="#000"/>
<circle cx="1094" cy="548.8" r="2.3" fill="#000"/>
<circle cx="1129.5" cy="548.8" r="2.3" fill="#000"/>
<circle cx="1182.5" cy="548.8" r="2.3" fill="#000"/>
<circle cx="1182.5" cy="613.5" r="2.3" fill="#000"/>
<circle cx="1236.5" cy="613.5" r="2.3" fill="#000"/>
<polyline points="1094.2,548.8 1094.2,569" fill="none" stroke="#1c1c1c" stroke-width="1" />
<path d="M1094.2,572 C1098.8,573.5 1098.6,577.3 1095.6,579.6 L1092.6,582.2 C1089.6,584.8 1090,587 1094.2,587" fill="none" stroke="#1c1c1c" stroke-width="1" />
<circle cx="1094.2" cy="570.5" r="1.5" fill="#fff" stroke="#1c1c1c" stroke-width="1"/>
<circle cx="1094.2" cy="588.5" r="1.5" fill="#fff" stroke="#1c1c1c" stroke-width="1"/>
<polyline points="1094.2,590 1094.2,603" fill="none" stroke="#1c1c1c" stroke-width="1" />
<circle cx="1094.2" cy="607.5" r="5.4" fill="#000"/>
<circle cx="1068" cy="607.5" r="5.4" fill="#000"/>
<text x="1076" y="577.82" font-size="10.6" text-anchor="middle" xml:space="preserve" >F1</text>
<g clip-path="url(#c30a)">
<text x="1077.5" y="587.52" font-size="10.6" text-anchor="middle" xml:space="preserve" >30A</text>
</g>
<polyline points="1088.8,621 1099.8,621" fill="none" stroke="#1c1c1c" stroke-width="1" />
<polyline points="1094.3,616 1094.3,626" fill="none" stroke="#1c1c1c" stroke-width="1" />
<polyline points="1063.5,621 1074,621" fill="none" stroke="#1c1c1c" stroke-width="1" />
<text x="1090" y="635.6" font-size="8.6" text-anchor="middle" fill="#000" xml:space="preserve" >13VDC</text>
<polyline points="1068,603 1068,597 1004,597 1004,614" fill="none" stroke="#1c1c1c" stroke-width="1" />
<polyline points="997,614 1012,614" fill="none" stroke="#1c1c1c" stroke-width="1" />
<polyline points="997.6,614 995.4,620" fill="none" stroke="#1c1c1c" stroke-width="1" />
<polyline points="1002.3,614 1000.1,620" fill="none" stroke="#1c1c1c" stroke-width="1" />
<polyline points="1007,614 1004.8,620" fill="none" stroke="#1c1c1c" stroke-width="1" />
<polyline points="1011.8,614 1009.6,620" fill="none" stroke="#1c1c1c" stroke-width="1" />
<circle cx="1044" cy="597" r="2.1" fill="#000"/>
<polyline points="1044,597 1044,621" fill="none" stroke="#1c1c1c" stroke-width="1" />
<polyline points="1036,621.3 1052,621.3" fill="none" stroke="#1c1c1c" stroke-width="1" />
<polyline points="1037.8,623.8 1050.2,623.8" fill="none" stroke="#1c1c1c" stroke-width="1" />
<polyline points="1040.1,626.5 1047.9,626.5" fill="none" stroke="#1c1c1c" stroke-width="1" />
<polyline points="1042.6,628.8 1045.4,628.8" fill="none" stroke="#1c1c1c" stroke-width="1" />
<polyline points="1129.5,548.8 1129.5,575.5" fill="none" stroke="#1c1c1c" stroke-width="1" />
<polygon points="1129.5,575.5 1120.7,584.6 1138.3,584.6" fill="#000"/>
<polyline points="1120.7,575.6 1138.3,575.6" fill="none" stroke="#1c1c1c" stroke-width="1.2" />
<polyline points="1129.5,584.5 1129.5,613.5 1236.5,613.5 1236.5,622.5" fill="none" stroke="#1c1c1c" stroke-width="1" />
<polyline points="1228.5,622.8 1244.5,622.8" fill="none" stroke="#1c1c1c" stroke-width="1" />
<polyline points="1230.3,625.3 1242.7,625.3" fill="none" stroke="#1c1c1c" stroke-width="1" />
<polyline points="1232.6,628 1240.4,628" fill="none" stroke="#1c1c1c" stroke-width="1" />
<polyline points="1235.1,630.3 1237.9,630.3" fill="none" stroke="#1c1c1c" stroke-width="1" />
<text x="1141" y="583.82" font-size="10.6" xml:space="preserve" >D4</text>
<g clip-path="url(#cmr)">
<text x="1132" y="595.02" font-size="10.6" xml:space="preserve" >MR750</text>
</g>
<polyline points="1176,575.5 1189,575.5" fill="none" stroke="#1c1c1c" stroke-width="1" />
<polyline points="1176,579.5 1189,579.5" fill="none" stroke="#1c1c1c" stroke-width="1" />
<polyline points="1182.5,579.5 1182.5,613.5" fill="none" stroke="#1c1c1c" stroke-width="1" />
<text x="1192" y="580.82" font-size="10.6" xml:space="preserve" >C18</text>
<text x="1186" y="591.47" font-size="10.2" xml:space="preserve" >.068 to</text>
<text x="1192" y="602.32" font-size="10.6" xml:space="preserve" >.1uF</text>
<polyline points="1228.5,577 1244.5,577" fill="none" stroke="#1c1c1c" stroke-width="1" />
<path d="M1228.5,582.5 q8,-4.6 16,0" fill="none" stroke="#1c1c1c" stroke-width="1" />
<polyline points="1236.5,580.3 1236.5,613.5" fill="none" stroke="#1c1c1c" stroke-width="1" />
<polyline points="1230,572.6 1234,572.6" fill="none" stroke="#1c1c1c" stroke-width="0.8" />
<polyline points="1232,570.6 1232,574.6" fill="none" stroke="#1c1c1c" stroke-width="0.8" />
<text x="1248" y="582.32" font-size="10.6" xml:space="preserve" >C19</text>
<text x="1243" y="595.82" font-size="10.6" xml:space="preserve" >22uF</text>
<text x="1243" y="609.32" font-size="10.6" xml:space="preserve" >16-25Vdc</text>
<rect x="505.5" y="479" width="36" height="5.5" fill="none" stroke="#1c1c1c" stroke-width="1" rx="0" />
<polyline points="514,500.4 504,500.4 504,577.2 521.2,577.2 521.2,571.5" fill="none" stroke="#1c1c1c" stroke-width="1" />
<polyline points="533,500.4 543,500.4 543,577.2 525.8,577.2 525.8,571.5" fill="none" stroke="#1c1c1c" stroke-width="1" />
<polyline points="523.5,473 523.5,507" fill="none" stroke="#000" stroke-width="1" stroke-dasharray="1.6,1.2"/>
<circle cx="516" cy="458.6" r="2.2" fill="#fff" stroke="#1c1c1c" stroke-width="1"/>
<circle cx="531" cy="458.6" r="2.2" fill="#fff" stroke="#1c1c1c" stroke-width="1"/>
<circle cx="516" cy="468.8" r="2.2" fill="#fff" stroke="#1c1c1c" stroke-width="1"/>
<circle cx="531" cy="468.8" r="2.2" fill="#fff" stroke="#1c1c1c" stroke-width="1"/>
<circle cx="516" cy="479" r="2.2" fill="#fff" stroke="#1c1c1c" stroke-width="1"/>
<circle cx="531" cy="479" r="2.2" fill="#fff" stroke="#1c1c1c" stroke-width="1"/>
<circle cx="516" cy="490.2" r="2.2" fill="#fff" stroke="#1c1c1c" stroke-width="1"/>
<circle cx="531" cy="490.2" r="2.2" fill="#fff" stroke="#1c1c1c" stroke-width="1"/>
<circle cx="516" cy="500.4" r="2.2" fill="#fff" stroke="#1c1c1c" stroke-width="1"/>
<circle cx="531" cy="500.4" r="2.2" fill="#fff" stroke="#1c1c1c" stroke-width="1"/>
<circle cx="516" cy="509.6" r="2.2" fill="#fff" stroke="#1c1c1c" stroke-width="1"/>
<circle cx="531" cy="509.6" r="2.2" fill="#fff" stroke="#1c1c1c" stroke-width="1"/>
<rect x="518" y="467" width="4" height="13.6" fill="#000" stroke="none" stroke-width="0" rx="0" />
<rect x="525.1" y="467" width="4.1" height="13.6" fill="#000" stroke="none" stroke-width="0" rx="0" />
<rect x="518" y="498.3" width="4" height="13.1" fill="#000" stroke="none" stroke-width="0" rx="0" />
<rect x="525.1" y="498.3" width="4.1" height="13.1" fill="#000" stroke="none" stroke-width="0" rx="0" />
<path d="M519.1,571.5 v-7.6 a4.4,4.4 0 0 1 8.8,0 v7.6 z" fill="none" stroke="#1c1c1c" stroke-width="1" />
<path d="M520.7,571.5 v-6.6 a2.8,2.8 0 0 1 5.6,0 v6.6" fill="none" stroke="#1c1c1c" stroke-width="0.8" />
<circle cx="523.5" cy="563.6" r="1" fill="#fff" stroke="#1c1c1c" stroke-width="0.7"/>
<polyline points="520.9,570.8 523,564.6" fill="none" stroke="#1c1c1c" stroke-width="0.7" />
<polyline points="526.1,570.8 524,564.6" fill="none" stroke="#1c1c1c" stroke-width="0.7" />
<text x="523.5" y="521.1" font-size="8.6" text-anchor="middle" fill="#000" xml:space="preserve" >SW1</text>
<rect x="619.5" y="479" width="36" height="5.5" fill="none" stroke="#1c1c1c" stroke-width="1" rx="0" />
<polyline points="628,500.4 617.5,500.4 617.5,577.2 635.2,577.2 635.2,571.5" fill="none" stroke="#1c1c1c" stroke-width="1" />
<polyline points="647,500.4 656.5,500.4 656.5,577.2 639.8,577.2 639.8,571.5" fill="none" stroke="#1c1c1c" stroke-width="1" />
<polyline points="637.5,473 637.5,507" fill="none" stroke="#000" stroke-width="1" stroke-dasharray="1.6,1.2"/>
<circle cx="630" cy="458.6" r="2.2" fill="#fff" stroke="#1c1c1c" stroke-width="1"/>
<circle cx="645" cy="458.6" r="2.2" fill="#fff" stroke="#1c1c1c" stroke-width="1"/>
<circle cx="630" cy="468.8" r="2.2" fill="#fff" stroke="#1c1c1c" stroke-width="1"/>
<circle cx="645" cy="468.8" r="2.2" fill="#fff" stroke="#1c1c1c" stroke-width="1"/>
<circle cx="630" cy="479" r="2.2" fill="#fff" stroke="#1c1c1c" stroke-width="1"/>
<circle cx="645" cy="479" r="2.2" fill="#fff" stroke="#1c1c1c" stroke-width="1"/>
<circle cx="630" cy="490.2" r="2.2" fill="#fff" stroke="#1c1c1c" stroke-width="1"/>
<circle cx="645" cy="490.2" r="2.2" fill="#fff" stroke="#1c1c1c" stroke-width="1"/>
<circle cx="630" cy="500.4" r="2.2" fill="#fff" stroke="#1c1c1c" stroke-width="1"/>
<circle cx="645" cy="500.4" r="2.2" fill="#fff" stroke="#1c1c1c" stroke-width="1"/>
<circle cx="630" cy="509.6" r="2.2" fill="#fff" stroke="#1c1c1c" stroke-width="1"/>
<circle cx="645" cy="509.6" r="2.2" fill="#fff" stroke="#1c1c1c" stroke-width="1"/>
<rect x="632" y="467" width="4" height="13.6" fill="#000" stroke="none" stroke-width="0" rx="0" />
<rect x="639.1" y="467" width="4.1" height="13.6" fill="#000" stroke="none" stroke-width="0" rx="0" />
<rect x="632" y="498.3" width="4" height="13.1" fill="#000" stroke="none" stroke-width="0" rx="0" />
<rect x="639.1" y="498.3" width="4.1" height="13.1" fill="#000" stroke="none" stroke-width="0" rx="0" />
<path d="M633.1,571.5 v-7.6 a4.4,4.4 0 0 1 8.8,0 v7.6 z" fill="none" stroke="#1c1c1c" stroke-width="1" />
<path d="M634.7,571.5 v-6.6 a2.8,2.8 0 0 1 5.6,0 v6.6" fill="none" stroke="#1c1c1c" stroke-width="0.8" />
<circle cx="637.5" cy="563.6" r="1" fill="#fff" stroke="#1c1c1c" stroke-width="0.7"/>
<polyline points="634.9,570.8 637,564.6" fill="none" stroke="#1c1c1c" stroke-width="0.7" />
<polyline points="640.1,570.8 638,564.6" fill="none" stroke="#1c1c1c" stroke-width="0.7" />
<rect x="730" y="463.5" width="38.5" height="5.3" fill="none" stroke="#1c1c1c" stroke-width="1" rx="0" />
<rect x="732.5" y="479" width="36" height="5.5" fill="none" stroke="#1c1c1c" stroke-width="1" rx="0" />
<polyline points="740.5,500.4 729.4,500.4 729.4,577.2 747.95,577.2 747.95,571.5" fill="none" stroke="#1c1c1c" stroke-width="1" />
<polyline points="760,500.4 768.5,500.4 768.5,577.2 752.55,577.2 752.55,571.5" fill="none" stroke="#1c1c1c" stroke-width="1" />
<polyline points="750.25,473 750.25,507" fill="none" stroke="#000" stroke-width="1" stroke-dasharray="1.6,1.2"/>
<circle cx="742.5" cy="458.6" r="2.2" fill="#fff" stroke="#1c1c1c" stroke-width="1"/>
<circle cx="758" cy="458.6" r="2.2" fill="#fff" stroke="#1c1c1c" stroke-width="1"/>
<circle cx="742.5" cy="468.8" r="2.2" fill="#fff" stroke="#1c1c1c" stroke-width="1"/>
<circle cx="758" cy="468.8" r="2.2" fill="#fff" stroke="#1c1c1c" stroke-width="1"/>
<circle cx="742.5" cy="479" r="2.2" fill="#fff" stroke="#1c1c1c" stroke-width="1"/>
<circle cx="758" cy="479" r="2.2" fill="#fff" stroke="#1c1c1c" stroke-width="1"/>
<circle cx="742.5" cy="490.2" r="2.2" fill="#fff" stroke="#1c1c1c" stroke-width="1"/>
<circle cx="758" cy="490.2" r="2.2" fill="#fff" stroke="#1c1c1c" stroke-width="1"/>
<circle cx="742.5" cy="500.4" r="2.2" fill="#fff" stroke="#1c1c1c" stroke-width="1"/>
<circle cx="758" cy="500.4" r="2.2" fill="#fff" stroke="#1c1c1c" stroke-width="1"/>
<circle cx="742.5" cy="509.6" r="2.2" fill="#fff" stroke="#1c1c1c" stroke-width="1"/>
<circle cx="758" cy="509.6" r="2.2" fill="#fff" stroke="#1c1c1c" stroke-width="1"/>
<rect x="744.75" y="467" width="4" height="13.6" fill="#000" stroke="none" stroke-width="0" rx="0" />
<rect x="751.85" y="467" width="4.1" height="13.6" fill="#000" stroke="none" stroke-width="0" rx="0" />
<rect x="744.75" y="498.3" width="4" height="13.1" fill="#000" stroke="none" stroke-width="0" rx="0" />
<rect x="751.85" y="498.3" width="4.1" height="13.1" fill="#000" stroke="none" stroke-width="0" rx="0" />
<path d="M745.85,571.5 v-7.6 a4.4,4.4 0 0 1 8.8,0 v7.6 z" fill="none" stroke="#1c1c1c" stroke-width="1" />
<path d="M747.45,571.5 v-6.6 a2.8,2.8 0 0 1 5.6,0 v6.6" fill="none" stroke="#1c1c1c" stroke-width="0.8" />
<circle cx="750.25" cy="563.6" r="1" fill="#fff" stroke="#1c1c1c" stroke-width="0.7"/>
<polyline points="747.65,570.8 749.75,564.6" fill="none" stroke="#1c1c1c" stroke-width="0.7" />
<polyline points="752.85,570.8 750.75,564.6" fill="none" stroke="#1c1c1c" stroke-width="0.7" />
<text x="750.25" y="521.1" font-size="8.6" text-anchor="middle" fill="#000" xml:space="preserve" >SW3</text>
<text x="510" y="453.32" font-size="10.6" text-anchor="middle" xml:space="preserve" >S1</text>
<text x="617.5" y="463.32" font-size="10.6" text-anchor="middle" xml:space="preserve" >S2</text>
<text x="723.5" y="480.82" font-size="10.6" text-anchor="middle" xml:space="preserve" >S3</text>
<polyline points="533.2,490.2 559.5,490.2 559.5,501.5" fill="none" stroke="#1c1c1c" stroke-width="1" />
<polyline points="551.5,501.8 567.5,501.8" fill="none" stroke="#1c1c1c" stroke-width="1" />
<polyline points="553.3,504.3 565.7,504.3" fill="none" stroke="#1c1c1c" stroke-width="1" />
<polyline points="555.6,507 563.4,507" fill="none" stroke="#1c1c1c" stroke-width="1" />
<polyline points="558.1,509.3 560.9,509.3" fill="none" stroke="#1c1c1c" stroke-width="1" />
<polyline points="627.8,490.2 601,490.2 601,548.8" fill="none" stroke="#1c1c1c" stroke-width="1" />
<polyline points="647.2,490.2 670.5,490.2 670.5,501.5" fill="none" stroke="#1c1c1c" stroke-width="1" />
<polyline points="662.5,501.8 678.5,501.8" fill="none" stroke="#1c1c1c" stroke-width="1" />
<polyline points="664.3,504.3 676.7,504.3" fill="none" stroke="#1c1c1c" stroke-width="1" />
<polyline points="666.6,507 674.4,507" fill="none" stroke="#1c1c1c" stroke-width="1" />
<polyline points="669.1,509.3 671.9,509.3" fill="none" stroke="#1c1c1c" stroke-width="1" />
<polyline points="740.3,490.2 697,490.2 697,517 543,517" fill="none" stroke="#1c1c1c" stroke-width="1" />
<circle cx="543" cy="517" r="2.3" fill="#000"/>
<circle cx="504" cy="525.5" r="2.3" fill="#000"/>
<circle cx="617.5" cy="525.5" r="2.3" fill="#000"/>
<polyline points="531,456 531,446.5 728,446.5" fill="none" stroke="#1414e6" stroke-width="2.6" stroke-linejoin="miter"/>
<circle cx="730" cy="446.5" r="2.3" fill="#000"/>
<circle cx="730" cy="463.6" r="2.3" fill="#000"/>
<polyline points="742.5,456.4 742.5,448.3 787,448.3" fill="none" stroke="#1c1c1c" stroke-width="1" />
<polyline points="787,448.3 789.08,445.3 793.25,451.3 797.42,445.3 801.58,451.3 805.75,445.3 809.92,451.3 812,448.3" fill="none" stroke="#1c1c1c" stroke-width="1" />
<polyline points="812,448.3 824.5,448.3 824.5,460.3" fill="none" stroke="#1c1c1c" stroke-width="1" />
<polyline points="816.5,460.6 832.5,460.6" fill="none" stroke="#1c1c1c" stroke-width="1" />
<polyline points="818.3,463.1 830.7,463.1" fill="none" stroke="#1c1c1c" stroke-width="1" />
<polyline points="820.6,465.8 828.4,465.8" fill="none" stroke="#1c1c1c" stroke-width="1" />
<polyline points="823.1,468.1 825.9,468.1" fill="none" stroke="#1c1c1c" stroke-width="1" />
<polyline points="758,448.3 758,456.4" fill="none" stroke="#1c1c1c" stroke-width="1" />
<circle cx="758" cy="448.3" r="2.3" fill="#000"/>
<text x="798" y="443.82" font-size="10.6" text-anchor="middle" xml:space="preserve" >R4</text>
<text x="798" y="462.32" font-size="10.6" text-anchor="middle" xml:space="preserve" >75</text>
<text x="529.5" y="562.96" font-size="11" style='font-family:"Liberation Mono",monospace' xml:space="preserve" >I1</text>
<text x="642.5" y="562.46" font-size="11" style='font-family:"Liberation Mono",monospace' xml:space="preserve" >I2</text>
<text x="752.5" y="562.46" font-size="11" style='font-family:"Liberation Mono",monospace' xml:space="preserve" >I3</text>
<text x="523.5" y="589.59" font-size="10.8" text-anchor="middle" xml:space="preserve" >POWER</text>
<text x="637.5" y="589.59" font-size="10.8" text-anchor="middle" xml:space="preserve" >REC AMP</text>
<text x="747" y="589.59" font-size="10.8" text-anchor="middle" xml:space="preserve" >DIAL A WATT</text>
<text x="690.5" y="611.08" font-size="8.55" text-anchor="middle" fill="#000" xml:space="preserve" >ALL SWITCHES ARE SHOWN IN THE OFF POSITION</text>
<text x="842" y="488.32" font-size="10.6" text-anchor="middle" xml:space="preserve" >S4</text>
<text x="842.5" y="499.12" font-size="10.6" text-anchor="middle" xml:space="preserve" >SSB</text>
<g clip-path="url(#coff)">
<text x="827" y="509.82" font-size="10.6" text-anchor="middle" xml:space="preserve" >OFF</text>
<text x="856.5" y="509.82" font-size="10.6" text-anchor="middle" xml:space="preserve" >ON</text>
</g>
<polyline points="826.5,513.2 841.5,513.2" fill="none" stroke="#000" stroke-width="2.2" />
<circle cx="829" cy="518" r="2.3" fill="#fff" stroke="#1c1c1c" stroke-width="1"/>
<circle cx="839.5" cy="518" r="2.3" fill="#fff" stroke="#1c1c1c" stroke-width="1"/>
<circle cx="850.5" cy="518" r="2.3" fill="#fff" stroke="#1c1c1c" stroke-width="1"/>
<polyline points="850.5,520.3 850.5,548.8" fill="none" stroke="#1c1c1c" stroke-width="1" />
<text x="492" y="650.9" font-size="13.6" font-weight="bold" fill="#111" xml:space="preserve" >NOTE:</text>
<g clip-path="url(#cnote)">
<text x="511" y="665.8" font-size="12.4" font-weight="bold" fill="#111">1.</text>
<text x="527.5" y="665.8" font-size="12.4" fill="#222">The wire colors used in this diagram will vary from the</text>
<text x="527.5" y="679" font-size="12.4" fill="#222">amp. Also the wire color will vary from amp to amp.</text>
<text x="511" y="705" font-size="12.4" font-weight="bold" fill="#111">2.</text>
<text x="527.5" y="705" font-size="12.4" fill="#222">The component type will vary from amp to amp see text for</text>
<text x="527.5" y="719.3" font-size="12.4" fill="#222">more information.</text>
<text x="511" y="742.6" font-size="12.4" font-weight="bold" fill="#111">3.</text>
<text x="527.5" y="742.6" font-size="12.4" fill="#222">This diagram is based on current production (2001) out</text>
<text x="527.5" y="757.2" font-size="12.4" fill="#222">of Texas Star.</text>
</g>
<text x="271.5" y="618.46" font-size="11" text-anchor="middle" xml:space="preserve" >S1</text>
<text x="332" y="618.46" font-size="11" text-anchor="middle" xml:space="preserve" >S2</text>
<text x="391" y="618.46" font-size="11" text-anchor="middle" xml:space="preserve" >S3</text>
<rect x="255" y="620.5" width="35" height="96.5" fill="#999999" stroke="#333" stroke-width="1" rx="0" />
<polyline points="255,629 290,629" fill="none" stroke="#333" stroke-width="1" />
<polyline points="255,623 262,623 262,629" fill="none" stroke="#333" stroke-width="1" />
<circle cx="282.5" cy="625.5" r="1.9" fill="#000"/>
<path d="M270.5,717 V690.5 a2,2 0 0 1 4,0 V717" fill="#fff" stroke="#666" stroke-width="1" />
<circle cx="260.5" cy="638.5" r="3" fill="#ffff88" stroke="#333" stroke-width="0.9"/>
<circle cx="284.5" cy="638.5" r="3" fill="#ffff88" stroke="#333" stroke-width="0.9"/>
<circle cx="260.5" cy="655" r="3" fill="#ffff88" stroke="#333" stroke-width="0.9"/>
<circle cx="284.5" cy="655" r="3" fill="#ffff88" stroke="#333" stroke-width="0.9"/>
<path d="M257.5,671.3 a3,3 0 0 1 6,0 a3,2.2 0 0 1 -6,0 z" fill="#ffff88" stroke="#333" stroke-width="0.9" />
<path d="M281.5,671.3 a3,3 0 0 1 6,0 a3,2.2 0 0 1 -6,0 z" fill="#ffff88" stroke="#333" stroke-width="0.9" />
<circle cx="260.5" cy="686" r="3" fill="#ffff88" stroke="#333" stroke-width="0.9"/>
<circle cx="284.5" cy="686" r="3" fill="#ffff88" stroke="#333" stroke-width="0.9"/>
<circle cx="260.5" cy="702.5" r="3" fill="#ffff88" stroke="#333" stroke-width="0.9"/>
<circle cx="284.5" cy="702.5" r="3" fill="#ffff88" stroke="#333" stroke-width="0.9"/>
<polyline points="252,693 260,704" fill="none" stroke="#444" stroke-width="0.8" />
<polyline points="260,704 254,716" fill="none" stroke="#444" stroke-width="0.8" />
<polyline points="293,693 285,704" fill="none" stroke="#444" stroke-width="0.8" />
<polyline points="285,704 291,716" fill="none" stroke="#444" stroke-width="0.8" />
<rect x="314" y="620.5" width="35" height="96.5" fill="#999999" stroke="#333" stroke-width="1" rx="0" />
<polyline points="314,629 349,629" fill="none" stroke="#333" stroke-width="1" />
<polyline points="314,623 321,623 321,629" fill="none" stroke="#333" stroke-width="1" />
<circle cx="341.5" cy="625.5" r="1.9" fill="#000"/>
<path d="M329.5,717 V690.5 a2,2 0 0 1 4,0 V717" fill="#fff" stroke="#666" stroke-width="1" />
<circle cx="319.5" cy="638.5" r="3" fill="#ffff88" stroke="#333" stroke-width="0.9"/>
<circle cx="343.5" cy="638.5" r="3" fill="#ffff88" stroke="#333" stroke-width="0.9"/>
<circle cx="319.5" cy="655" r="3" fill="#ffff88" stroke="#333" stroke-width="0.9"/>
<circle cx="343.5" cy="655" r="3" fill="#ffff88" stroke="#333" stroke-width="0.9"/>
<path d="M316.5,671.3 a3,3 0 0 1 6,0 a3,2.2 0 0 1 -6,0 z" fill="#ffff88" stroke="#333" stroke-width="0.9" />
<path d="M340.5,671.3 a3,3 0 0 1 6,0 a3,2.2 0 0 1 -6,0 z" fill="#ffff88" stroke="#333" stroke-width="0.9" />
<circle cx="319.5" cy="686" r="3" fill="#ffff88" stroke="#333" stroke-width="0.9"/>
<circle cx="343.5" cy="686" r="3" fill="#ffff88" stroke="#333" stroke-width="0.9"/>
<circle cx="319.5" cy="702.5" r="3" fill="#ffff88" stroke="#333" stroke-width="0.9"/>
<circle cx="343.5" cy="702.5" r="3" fill="#ffff88" stroke="#333" stroke-width="0.9"/>
<polyline points="311,693 319,704" fill="none" stroke="#444" stroke-width="0.8" />
<polyline points="319,704 313,716" fill="none" stroke="#444" stroke-width="0.8" />
<polyline points="352,693 344,704" fill="none" stroke="#444" stroke-width="0.8" />
<polyline points="344,704 350,716" fill="none" stroke="#444" stroke-width="0.8" />
<rect x="374" y="620.5" width="35" height="96.5" fill="#999999" stroke="#333" stroke-width="1" rx="0" />
<polyline points="374,629 409,629" fill="none" stroke="#333" stroke-width="1" />
<polyline points="374,623 381,623 381,629" fill="none" stroke="#333" stroke-width="1" />
<circle cx="401.5" cy="625.5" r="1.9" fill="#000"/>
<path d="M389.5,717 V690.5 a2,2 0 0 1 4,0 V717" fill="#fff" stroke="#666" stroke-width="1" />
<circle cx="379.5" cy="638.5" r="3" fill="#ffff88" stroke="#333" stroke-width="0.9"/>
<circle cx="403.5" cy="638.5" r="3" fill="#ffff88" stroke="#333" stroke-width="0.9"/>
<circle cx="379.5" cy="655" r="3" fill="#ffff88" stroke="#333" stroke-width="0.9"/>
<circle cx="403.5" cy="655" r="3" fill="#ffff88" stroke="#333" stroke-width="0.9"/>
<path d="M376.5,671.3 a3,3 0 0 1 6,0 a3,2.2 0 0 1 -6,0 z" fill="#ffff88" stroke="#333" stroke-width="0.9" />
<path d="M400.5,671.3 a3,3 0 0 1 6,0 a3,2.2 0 0 1 -6,0 z" fill="#ffff88" stroke="#333" stroke-width="0.9" />
<circle cx="379.5" cy="686" r="3" fill="#ffff88" stroke="#333" stroke-width="0.9"/>
<circle cx="403.5" cy="686" r="3" fill="#ffff88" stroke="#333" stroke-width="0.9"/>
<circle cx="379.5" cy="702.5" r="3" fill="#ffff88" stroke="#333" stroke-width="0.9"/>
<circle cx="403.5" cy="702.5" r="3" fill="#ffff88" stroke="#333" stroke-width="0.9"/>
<polyline points="371,693 379,704" fill="none" stroke="#444" stroke-width="0.8" />
<polyline points="379,704 373,716" fill="none" stroke="#444" stroke-width="0.8" />
<polyline points="412,693 404,704" fill="none" stroke="#444" stroke-width="0.8" />
<polyline points="404,704 410,716" fill="none" stroke="#444" stroke-width="0.8" />
<path d="M244,716.6 H420 L424.5,721 V734.5 H428.5 V747.5 H414 V743.6 H368.5 V747.5 H354.5 V743.6 H309 V747.5 H294.7 V743.6 H249.7 V747.5 H235.5 V734.5 H239.5 V721 Z" fill="#ffff99" stroke="#222" stroke-width="1.1" />
<path d="M235.5,747.3 H249.7 V743.8 H294.7 V747.3 H309 V743.8 H354.5 V747.3 H368.5 V743.8 H414 V747.3 H428.5" fill="none" stroke="#111" stroke-width="1.9" stroke-linejoin="miter"/>
<path d="M250.5,744.6 V785.5 a2.5,2.5 0 0 0 2.5,2.5 H291.7 a2.5,2.5 0 0 0 2.5,-2.5 V744.6" fill="#fff" stroke="#333" stroke-width="1" />
<path d="M309.5,744.6 V785.5 a2.5,2.5 0 0 0 2.5,2.5 H350.7 a2.5,2.5 0 0 0 2.5,-2.5 V744.6" fill="#fff" stroke="#333" stroke-width="1" />
<path d="M369.2,744.6 V785.5 a2.5,2.5 0 0 0 2.5,2.5 H410.4 a2.5,2.5 0 0 0 2.5,-2.5 V744.6" fill="#fff" stroke="#333" stroke-width="1" />
<polyline points="242.5,748 242.5,755 250.5,755" fill="none" stroke="#333" stroke-width="1" />
<polyline points="301.5,755 309.5,755" fill="none" stroke="#333" stroke-width="1" />
<polyline points="301.5,748 301.5,755" fill="none" stroke="#333" stroke-width="1" />
<polyline points="361,755 369.2,755" fill="none" stroke="#333" stroke-width="1" />
<polyline points="361,748 361,755" fill="none" stroke="#333" stroke-width="1" />
<polyline points="413.4,755 421.5,755 421.5,748" fill="none" stroke="#333" stroke-width="1" />
<g clip-path="url(#clamp)">
<ellipse cx="272" cy="790.3" rx="9.5" ry="11" fill="#ffff88" stroke="#333"/>
<circle cx="272" cy="789.5" r="3.2" fill="#ffff88" stroke="#333" stroke-width="0.8"/>
<ellipse cx="331.5" cy="790.3" rx="9.5" ry="11" fill="#ffff88" stroke="#333"/>
<circle cx="331.5" cy="789.5" r="3.2" fill="#ffff88" stroke="#333" stroke-width="0.8"/>
<ellipse cx="391" cy="790.3" rx="9.5" ry="11" fill="#ffff88" stroke="#333"/>
<circle cx="391" cy="789.5" r="3.2" fill="#ffff88" stroke="#333" stroke-width="0.8"/>
</g>
<path d="M267.2,799.5 V811.5 a4.8,4.8 0 0 0 9.6,0 V799.5" fill="#fff" stroke="#333" stroke-width="1" />
<path d="M326.7,799.5 V811.5 a4.8,4.8 0 0 0 9.6,0 V799.5" fill="#fff" stroke="#333" stroke-width="1" />
<path d="M386.2,799.5 V811.5 a4.8,4.8 0 0 0 9.6,0 V799.5" fill="#fff" stroke="#333" stroke-width="1" />
<text x="248.5" y="800.32" font-size="12" style='font-family:"Liberation Mono",monospace' xml:space="preserve" >I1</text>
<text x="305.5" y="800.32" font-size="12" style='font-family:"Liberation Mono",monospace' xml:space="preserve" >I2</text>
<text x="366.5" y="800.32" font-size="12" style='font-family:"Liberation Mono",monospace' xml:space="preserve" >I3</text>
<text x="272.5" y="824.03" font-size="11.2" text-anchor="middle" xml:space="preserve" >POWER</text>
<text x="329.5" y="824.03" font-size="11.2" text-anchor="middle" xml:space="preserve" >REC AMP</text>
<text x="390" y="824.03" font-size="11.2" text-anchor="middle" xml:space="preserve" >AM</text>
<circle cx="182" cy="639" r="2.3" fill="#fff" stroke="#1c1c1c" stroke-width="1"/>
<circle cx="206" cy="639" r="2.3" fill="#fff" stroke="#1c1c1c" stroke-width="1"/>
<circle cx="182" cy="655.5" r="2.3" fill="#fff" stroke="#1c1c1c" stroke-width="1"/>
<circle cx="206" cy="655.5" r="2.3" fill="#fff" stroke="#1c1c1c" stroke-width="1"/>
<circle cx="182" cy="671.5" r="2.3" fill="#fff" stroke="#1c1c1c" stroke-width="1"/>
<circle cx="206" cy="671.5" r="2.3" fill="#fff" stroke="#1c1c1c" stroke-width="1"/>
<circle cx="182" cy="687" r="2.3" fill="#fff" stroke="#1c1c1c" stroke-width="1"/>
<circle cx="206" cy="687" r="2.3" fill="#fff" stroke="#1c1c1c" stroke-width="1"/>
<circle cx="182" cy="703.5" r="2.3" fill="#fff" stroke="#1c1c1c" stroke-width="1"/>
<circle cx="206" cy="703.5" r="2.3" fill="#fff" stroke="#1c1c1c" stroke-width="1"/>
<circle cx="182" cy="719.5" r="2.3" fill="#fff" stroke="#1c1c1c" stroke-width="1"/>
<circle cx="206" cy="719.5" r="2.3" fill="#fff" stroke="#1c1c1c" stroke-width="1"/>
<rect x="185.3" y="654" width="3.3" height="19" fill="#000" stroke="none" stroke-width="0" rx="0" />
<rect x="199.6" y="654" width="3.3" height="19" fill="#000" stroke="none" stroke-width="0" rx="0" />
<polyline points="184,655.5 187,655.5" fill="none" stroke="#000" stroke-width="1.4" />
<polyline points="184,671.5 187,671.5" fill="none" stroke="#000" stroke-width="1.4" />
<polyline points="201,655.5 204.3,655.5" fill="none" stroke="#000" stroke-width="1.4" />
<polyline points="201,671.5 204.3,671.5" fill="none" stroke="#000" stroke-width="1.4" />
<rect x="185.3" y="701" width="3.3" height="21" fill="#000" stroke="none" stroke-width="0" rx="0" />
<rect x="199.6" y="701" width="3.3" height="21" fill="#000" stroke="none" stroke-width="0" rx="0" />
<polyline points="184,702.5 187,702.5" fill="none" stroke="#000" stroke-width="1.4" />
<polyline points="184,720.5 187,720.5" fill="none" stroke="#000" stroke-width="1.4" />
<polyline points="201,702.5 204.3,702.5" fill="none" stroke="#000" stroke-width="1.4" />
<polyline points="201,720.5 204.3,720.5" fill="none" stroke="#000" stroke-width="1.4" />
<polyline points="194,663 194,712" fill="none" stroke="#000" stroke-width="1" stroke-dasharray="2,1.6"/>
<polyline points="188.6,663 194,663" fill="none" stroke="#000" stroke-width="1" />
<polyline points="188.6,712 194,712" fill="none" stroke="#000" stroke-width="1" />
<text x="195.5" y="738.99" font-size="8.3" text-anchor="middle" fill="#000" xml:space="preserve" >SHOWN IN THE</text>
<text x="195.5" y="748.79" font-size="8.3" text-anchor="middle" fill="#000" xml:space="preserve" >OFF POSITION</text>
<text x="528" y="801.82" font-size="10.6" text-anchor="middle" xml:space="preserve" >DX250HDV</text>
<text x="527" y="813.32" font-size="10.6" text-anchor="middle" xml:space="preserve" >T1</text>
<text x="777.5" y="801.82" font-size="10.6" text-anchor="middle" xml:space="preserve" >DX350HDV</text>
<text x="775" y="813.32" font-size="10.6" text-anchor="middle" xml:space="preserve" >T1</text>
<path d="M472,832.6 H498.5" fill="none" stroke="#0a3a0a" stroke-width="3.9" stroke-linejoin="round"/>
<path d="M472,832.6 H498.5" fill="none" stroke="#008800" stroke-width="2.5" stroke-linejoin="round"/>
<path d="M558,832.6 H573 L578,837.5 V905" fill="none" stroke="#0a3a0a" stroke-width="3.9" stroke-linejoin="round"/>
<path d="M558,832.6 H573 L578,837.5 V905" fill="none" stroke="#008800" stroke-width="2.5" stroke-linejoin="round"/>
<path d="M558,838.6 H567 L570.6,843 V889 L566.5,894.5 H558" fill="none" stroke="#0a3a0a" stroke-width="3.9" stroke-linejoin="round"/>
<path d="M558,838.6 H567 L570.6,843 V889 L566.5,894.5 H558" fill="none" stroke="#008800" stroke-width="2.5" stroke-linejoin="round"/>
<path d="M558,844.3 H561.5 L564.3,848 V885 L561.5,889 H558" fill="none" stroke="#0a3a0a" stroke-width="3.9" stroke-linejoin="round"/>
<path d="M558,844.3 H561.5 L564.3,848 V885 L561.5,889 H558" fill="none" stroke="#008800" stroke-width="2.5" stroke-linejoin="round"/>
<path d="M498.5,838.6 H490 L485,844 V889 L490,895 H498.5" fill="none" stroke="#0a3a0a" stroke-width="3.9" stroke-linejoin="round"/>
<path d="M498.5,838.6 H490 L485,844 V889 L490,895 H498.5" fill="none" stroke="#008800" stroke-width="2.5" stroke-linejoin="round"/>
<path d="M498.5,844.3 H495 L492,848 V885 L495,889 H498.5" fill="none" stroke="#0a3a0a" stroke-width="3.9" stroke-linejoin="round"/>
<path d="M498.5,844.3 H495 L492,848 V885 L495,889 H498.5" fill="none" stroke="#008800" stroke-width="2.5" stroke-linejoin="round"/>
<path d="M472,899.8 H498.5" fill="none" stroke="#0a3a0a" stroke-width="3.9" stroke-linejoin="round"/>
<path d="M472,899.8 H498.5" fill="none" stroke="#008800" stroke-width="2.5" stroke-linejoin="round"/>
<rect x="502" y="817.5" width="53" height="87.5" fill="#999999" stroke="#333" stroke-width="1" rx="0" />
<polyline points="502,865.6 555,865.6" fill="none" stroke="#ddd" stroke-width="1" />
<polyline points="502,866.7 555,866.7" fill="none" stroke="#333" stroke-width="1" />
<rect x="498.5" y="817" width="3.5" height="88" fill="#ffff99" stroke="#333" stroke-width="0.8" rx="0" />
<rect x="555" y="817" width="3.4" height="88" fill="#ffff99" stroke="#333" stroke-width="0.8" rx="0" />
<circle cx="471.5" cy="832.6" r="1.9" fill="#000"/>
<text x="471" y="828.36" font-size="10.6" text-anchor="middle" xml:space="preserve" >e</text>
<text x="471" y="896.32" font-size="10.6" text-anchor="middle" xml:space="preserve" >d</text>
<circle cx="471.5" cy="899.8" r="1.9" fill="#000"/>
<path d="M720,838 H746" fill="none" stroke="#0a3a0a" stroke-width="3.9" stroke-linejoin="round"/>
<path d="M720,838 H746" fill="none" stroke="#008800" stroke-width="2.5" stroke-linejoin="round"/>
<path d="M746,843.7 H743.5 L739.6,848 V888 L744,893 H746" fill="none" stroke="#0a3a0a" stroke-width="3.9" stroke-linejoin="round"/>
<path d="M746,843.7 H743.5 L739.6,848 V888 L744,893 H746" fill="none" stroke="#008800" stroke-width="2.5" stroke-linejoin="round"/>
<path d="M806.5,838 H814 L818.6,843 V893 L814,898.3 H806.5" fill="none" stroke="#0a3a0a" stroke-width="3.9" stroke-linejoin="round"/>
<path d="M806.5,838 H814 L818.6,843 V893 L814,898.3 H806.5" fill="none" stroke="#008800" stroke-width="2.5" stroke-linejoin="round"/>
<path d="M806.5,844 H809.5 L812.6,848 V886 L810,890 H806.5" fill="none" stroke="#0a3a0a" stroke-width="3.9" stroke-linejoin="round"/>
<path d="M806.5,844 H809.5 L812.6,848 V886 L810,890 H806.5" fill="none" stroke="#008800" stroke-width="2.5" stroke-linejoin="round"/>
<path d="M720,897.6 H746" fill="none" stroke="#0a3a0a" stroke-width="3.9" stroke-linejoin="round"/>
<path d="M720,897.6 H746" fill="none" stroke="#008800" stroke-width="2.5" stroke-linejoin="round"/>
<rect x="749.5" y="817.5" width="53.5" height="87.5" fill="#999999" stroke="#333" stroke-width="1" rx="0" />
<polyline points="749.5,866.4 803,866.4" fill="none" stroke="#ddd" stroke-width="1" />
<polyline points="749.5,867.5 803,867.5" fill="none" stroke="#333" stroke-width="1" />
<rect x="746.2" y="817" width="3.3" height="88" fill="#ffff99" stroke="#333" stroke-width="0.8" rx="0" />
<rect x="803" y="817" width="3.5" height="88" fill="#ffff99" stroke="#333" stroke-width="0.8" rx="0" />
<circle cx="719.3" cy="838" r="1.9" fill="#000"/>
<text x="718.5" y="833.36" font-size="10.6" text-anchor="middle" xml:space="preserve" >e</text>
<text x="718.5" y="893.32" font-size="10.6" text-anchor="middle" xml:space="preserve" >d</text>
<circle cx="719.3" cy="897.6" r="1.9" fill="#000"/>
<text x="1017.5" y="699.82" font-size="10.6" text-anchor="middle" xml:space="preserve" >T2</text>
<path d="M961,721 H950 L946,725 V782 L950,786.3 H961" fill="none" stroke="#3a1403" stroke-width="3.6" stroke-linejoin="round"/>
<path d="M961,721 H950 L946,725 V782 L950,786.3 H961" fill="none" stroke="#a03606" stroke-width="2.2" stroke-linejoin="round"/>
<path d="M961,727.6 H955 L951.6,731 V776.5 L955,780 H961" fill="none" stroke="#3a1403" stroke-width="3.6" stroke-linejoin="round"/>
<path d="M961,727.6 H955 L951.6,731 V776.5 L955,780 H961" fill="none" stroke="#a03606" stroke-width="2.2" stroke-linejoin="round"/>
<path d="M961,733.6 H959 L957,736 V771.5 L959,774 H961" fill="none" stroke="#3a1403" stroke-width="3.4" stroke-linejoin="round"/>
<path d="M961,733.6 H959 L957,736 V771.5 L959,774 H961" fill="none" stroke="#a03606" stroke-width="2" stroke-linejoin="round"/>
<path d="M1075,723 H1097" fill="none" stroke="#3a1403" stroke-width="3.6" stroke-linejoin="round"/>
<path d="M1075,723 H1097" fill="none" stroke="#a03606" stroke-width="2.2" stroke-linejoin="round"/>
<path d="M1075,784.5 H1097" fill="none" stroke="#3a1403" stroke-width="3.6" stroke-linejoin="round"/>
<path d="M1075,784.5 H1097" fill="none" stroke="#a03606" stroke-width="2.2" stroke-linejoin="round"/>
<path d="M1075,728.5 H1081 L1085,732.5 V775 L1081,779 H1075" fill="none" stroke="#3a1403" stroke-width="3.6" stroke-linejoin="round"/>
<path d="M1075,728.5 H1081 L1085,732.5 V775 L1081,779 H1075" fill="none" stroke="#a03606" stroke-width="2.2" stroke-linejoin="round"/>
<path d="M1075,734.5 H1078 L1080,737 V770.5 L1078,773 H1075" fill="none" stroke="#3a1403" stroke-width="3.4" stroke-linejoin="round"/>
<path d="M1075,734.5 H1078 L1080,737 V770.5 L1078,773 H1075" fill="none" stroke="#a03606" stroke-width="2" stroke-linejoin="round"/>
<rect x="965" y="704.2" width="106.5" height="98.3" fill="#999999" stroke="#333" stroke-width="1" rx="0" />
<polyline points="965,753.4 1071.5,753.4" fill="none" stroke="#e8e8e8" stroke-width="1" />
<polyline points="965,754.6 1071.5,754.6" fill="none" stroke="#222" stroke-width="1" />
<polyline points="1018,704.2 1018,802.5" fill="none" stroke="#000" stroke-width="1.4" />
<rect x="961.2" y="703" width="3.8" height="100" fill="#ffff99" stroke="#333" stroke-width="0.8" rx="0" />
<rect x="1071.5" y="703" width="3.7" height="100" fill="#ffff99" stroke="#333" stroke-width="0.8" rx="0" />
<polygon points="1097,720 1100,723 1097,726 1094,723" fill="#000"/><polygon points="1097,781.5 1100,784.5 1097,787.5 1094,784.5" fill="#000"/>
<text x="1097" y="717.82" font-size="10.6" text-anchor="middle" xml:space="preserve" >d</text>
<text x="1097" y="779.86" font-size="10.6" text-anchor="middle" xml:space="preserve" >e</text>
<polyline points="920.6,862.5 920.6,837 956,802" fill="none" stroke="#1c1c1c" stroke-width="1" />
<polygon points="959.5,798.5 958.2,805 953,799.8" fill="#000"/>
<polyline points="1116.6,862.5 1116.6,837 1081,802" fill="none" stroke="#1c1c1c" stroke-width="1" />
<polygon points="1077.5,798.5 1078.8,805 1084,799.8" fill="#000"/>
<text x="1020" y="815.02" font-size="10.6" text-anchor="middle" xml:space="preserve" >3 Turns</text>
<text x="980.5" y="823.86" font-size="10.6" text-anchor="middle" xml:space="preserve" >a</text>
<text x="981" y="840.82" font-size="10.6" text-anchor="middle" xml:space="preserve" >b</text>
<text x="981" y="856.36" font-size="10.6" text-anchor="middle" xml:space="preserve" >c</text>
<polyline points="987,820.6 1003,820.6" fill="none" stroke="#1c1c1c" stroke-width="1" />
<polyline points="987,837.4 1003,837.4" fill="none" stroke="#1c1c1c" stroke-width="1" />
<polyline points="987,854.2 1003,854.2" fill="none" stroke="#1c1c1c" stroke-width="1" />
<path d="M1003,820.6 a8.4,8.4 0 0 1 0,16.8 a8.4,8.4 0 0 1 0,16.8" fill="none" stroke="#1c1c1c" stroke-width="1" />
<rect x="1015.6" y="822" width="8" height="32" fill="none" stroke="#1c1c1c" stroke-width="0.9" rx="0" stroke-dasharray="2.2,1.8"/>
<path d="M1031,821 a4.6,4.12 0 0 0 0,8.25 a4.6,4.12 0 0 0 0,8.25 a4.6,4.12 0 0 0 0,8.25 a4.6,4.12 0 0 0 0,8.25" fill="none" stroke="#1c1c1c" stroke-width="1" />
<polyline points="1031,820.8 1054.5,820.8" fill="none" stroke="#1c1c1c" stroke-width="1" />
<polyline points="1031,854.2 1054.5,854.2" fill="none" stroke="#1c1c1c" stroke-width="1" />
<text x="1051" y="818.82" font-size="10.6" text-anchor="middle" xml:space="preserve" >d</text>
<text x="1050.5" y="852.86" font-size="10.6" text-anchor="middle" xml:space="preserve" >e</text>
<rect x="872.5" y="866.5" width="99.5" height="43.5" fill="#cccccc" stroke="#333" stroke-width="1" rx="2.5" />
<rect x="918" y="867.1" width="9.2" height="42.9" fill="#ffff99" stroke="none" stroke-width="0" rx="0" />
<circle cx="893" cy="889.3" r="12.6" fill="#fff" stroke="#1c1c1c" stroke-width="1"/>
<circle cx="951.5" cy="889.3" r="12.6" fill="#fff" stroke="#1c1c1c" stroke-width="1"/>
<rect x="1066.5" y="866" width="101" height="44" fill="#cccccc" stroke="#333" stroke-width="1" rx="2.5" />
<circle cx="1088" cy="888.4" r="12.6" fill="#fff" stroke="#1c1c1c" stroke-width="1"/>
<circle cx="1146" cy="888.4" r="12.6" fill="#fff" stroke="#1c1c1c" stroke-width="1"/>
<text x="1253.3" y="813.4" font-size="9.4" text-anchor="middle" letter-spacing="0.25">Q1 &amp; Q2</text>
<path d="M1242.6,818.5 H1264.5 V822 a10.95,10.6 0 0 1 -21.9,0 Z" fill="#808080" stroke="#333" stroke-width="1" />
<polyline points="1246.5,823.5 1260.5,823.5" fill="none" stroke="#444" stroke-width="1" stroke-dasharray="3,1.5"/>
<rect x="1242.6" y="843" width="21.9" height="16.5" fill="#808080" stroke="#333" stroke-width="1" rx="1.5" />
<polyline points="1247,859.5 1247,868" fill="none" stroke="#555" stroke-width="2.2" />
<polyline points="1247,868 1247,891" fill="none" stroke="#333" stroke-width="1" />
<polyline points="1252.7,859.5 1252.7,868" fill="none" stroke="#555" stroke-width="2.2" />
<polyline points="1252.7,868 1252.7,891" fill="none" stroke="#333" stroke-width="1" />
<polyline points="1259,859.5 1259,868" fill="none" stroke="#555" stroke-width="2.2" />
<polyline points="1259,868 1259,891" fill="none" stroke="#333" stroke-width="1" />
<text x="1253.5" y="901.1" font-size="10" text-anchor="middle" xml:space="preserve" >EBC</text>
<text x="1349" y="793.19" font-size="10.8" text-anchor="middle" xml:space="preserve" >Q3  Q4</text>
<text x="1297" y="806.05" font-size="10.7" xml:space="preserve" >DX250HDV   2SC2290</text>
<text x="1297" y="817.05" font-size="10.7" xml:space="preserve" >DX350HDV   2SC2879</text>
<polygon points="1359.98,861.72 1327.03,828.77 1312.47,843.33 1345.42,876.28" fill="#fff" stroke="#1c1c1c" stroke-width="1"/>
<polygon points="1345.42,861.72 1312.47,894.67 1327.03,909.23 1359.98,876.28" fill="#fff" stroke="#1c1c1c" stroke-width="1"/>
<polygon points="1345.42,876.28 1378.37,909.23 1392.93,894.67 1359.98,861.72" fill="#fff" stroke="#1c1c1c" stroke-width="1"/>
<polygon points="1345.5,861.8 1369.5,835.6 1386.5,835.6 1393.5,842.6 1378.3,857.5 1360,876.3" fill="#fff" stroke="#1c1c1c" stroke-width="1"/>
<path d="M1326,858.3 H1316.2 a10.6,10.6 0 0 0 0,21.2 H1326 Z" fill="#fff" stroke="#1c1c1c" stroke-width="1" />
<circle cx="1316.2" cy="869" r="6.4" fill="#fff" stroke="#1c1c1c" stroke-width="1"/>
<polyline points="1326,858 1326,880" fill="none" stroke="#000" stroke-width="2.2" />
<path d="M1380,858.3 H1389.3 a10.6,10.6 0 0 1 0,21.2 H1380 Z" fill="#fff" stroke="#1c1c1c" stroke-width="1" />
<circle cx="1389.3" cy="869" r="6.4" fill="#fff" stroke="#1c1c1c" stroke-width="1"/>
<polyline points="1380,858 1380,880" fill="none" stroke="#000" stroke-width="2.2" />
<circle cx="1352.7" cy="869" r="23.2" fill="#fff" stroke="#1c1c1c"/>
<text x="1326.5" y="846.39" font-size="10.8" text-anchor="middle" xml:space="preserve" >E</text>
<text x="1377.5" y="848.19" font-size="10.8" text-anchor="middle" xml:space="preserve" >C</text>
<text x="1326.5" y="899.19" font-size="10.8" text-anchor="middle" xml:space="preserve" >B</text>
<text x="1378.5" y="899.19" font-size="10.8" text-anchor="middle" xml:space="preserve" >E</text>
</g>
</svg>
<div id="gutr"></div>
<div id="sb"><div class="up"></div><div class="thumb"></div><div class="dn"></div></div>
<div id="tb">
<svg style="left:22px;top:16px" width="24" height="24" viewBox="0 0 24 24"><path d="M4 6h16v2H4zM4 11h16v2H4zM4 16h16v2H4z" fill="#fff"/></svg>
<div class="title">ts_dx250hdv_dx350hdv_sch.gif</div>
<div class="box" style="left:654px;width:24px;">1</div>
<div class="t" style="left:682px;">/</div><div class="t" style="left:695px;">1</div>
<div class="sep" style="left:727px"></div>
<svg style="left:740px;top:18px" width="20" height="20" viewBox="0 0 24 24"><path d="M5 11h14v2H5z" fill="#fff"/></svg>
<div class="box" style="left:772px;width:45px;">96%</div>
<svg style="left:829px;top:18px" width="20" height="20" viewBox="0 0 24 24"><path d="M19 13h-6v6h-2v-6H5v-2h6V5h2v6h6v2z" fill="#fff"/></svg>
<div class="sep" style="left:861px"></div>
<svg style="left:880px;top:16px" width="24" height="24" viewBox="0 0 24 24"><path d="M19 3H5c-1.1 0-2 .9-2 2v14c0 1.1.9 2 2 2h14c1.1 0 2-.9 2-2V5c0-1.1-.9-2-2-2zm0 16H5V5h14v14z" transform="translate(0,2.4) scale(1,0.8)" fill="#fff"/><path d="M12 7.5l2.5 3h-5zM12 16.5l2.500-3h-5z" fill="#fff"/></svg>
<svg style="left:918px;top:18px" width="20" height="20" viewBox="0 0 24 24"><path d="M7.34 6.41L.86 12.9l6.49 6.48 6.49-6.48-6.500-6.490zM3.690 12.900l3.660-3.660L11 12.900l-3.660 3.660-3.650-3.660zm15.670-6.260C17.610 4.880 15.300 4 13 4V.76L8.760 5 13 9.240V6c1.790 0 3.580.680 4.950 2.050 2.730 2.730 2.730 7.170 0 9.900C16.580 19.320 14.790 20 13 20c-.970 0-1.940-.210-2.840-.610l-1.490 1.490C10.020 21.620 11.510 22 13 22c2.300 0 4.610-.880 6.360-2.640 3.520-3.510 3.520-9.210 0-12.720z" fill="#fff"/></svg>
<svg style="left:1476px;top:18px" width="20" height="20" viewBox="0 0 24 24"><path d="M19 9h-4V3H9v6H5l7 7 7-7zM5 18v2h14v-2H5z" fill="#fff"/></svg>
<svg style="left:1516px;top:18px" width="20" height="20" viewBox="0 0 24 24"><path d="M19 8H5c-1.660 0-3 1.340-3 3v6h4v4h12v-4h4v-6c0-1.660-1.340-3-3-3zm-3 11H8v-5h8v5zm3-7c-.550 0-1-.450-1-1s.450-1 1-1 1 .450 1 1-.450 1-1 1zm-1-9H6v4h12V3z" fill="#fff"/></svg>
<svg style="left:1556px;top:18px" width="20" height="20" viewBox="0 0 24 24"><path d="M12 8c1.100 0 2-.900 2-2s-.900-2-2-2-2 .900-2 2 .900 2 2 2zm0 2c-1.100 0-2 .900-2 2s.900 2 2 2 2-.900 2-2-.900-2-2-2zm0 6c-1.100 0-2 .900-2 2s.900 2 2 2 2-.900 2-2-.900-2-2-2z" fill="#fff"/></svg>
</div>
</div>
</body></html>
